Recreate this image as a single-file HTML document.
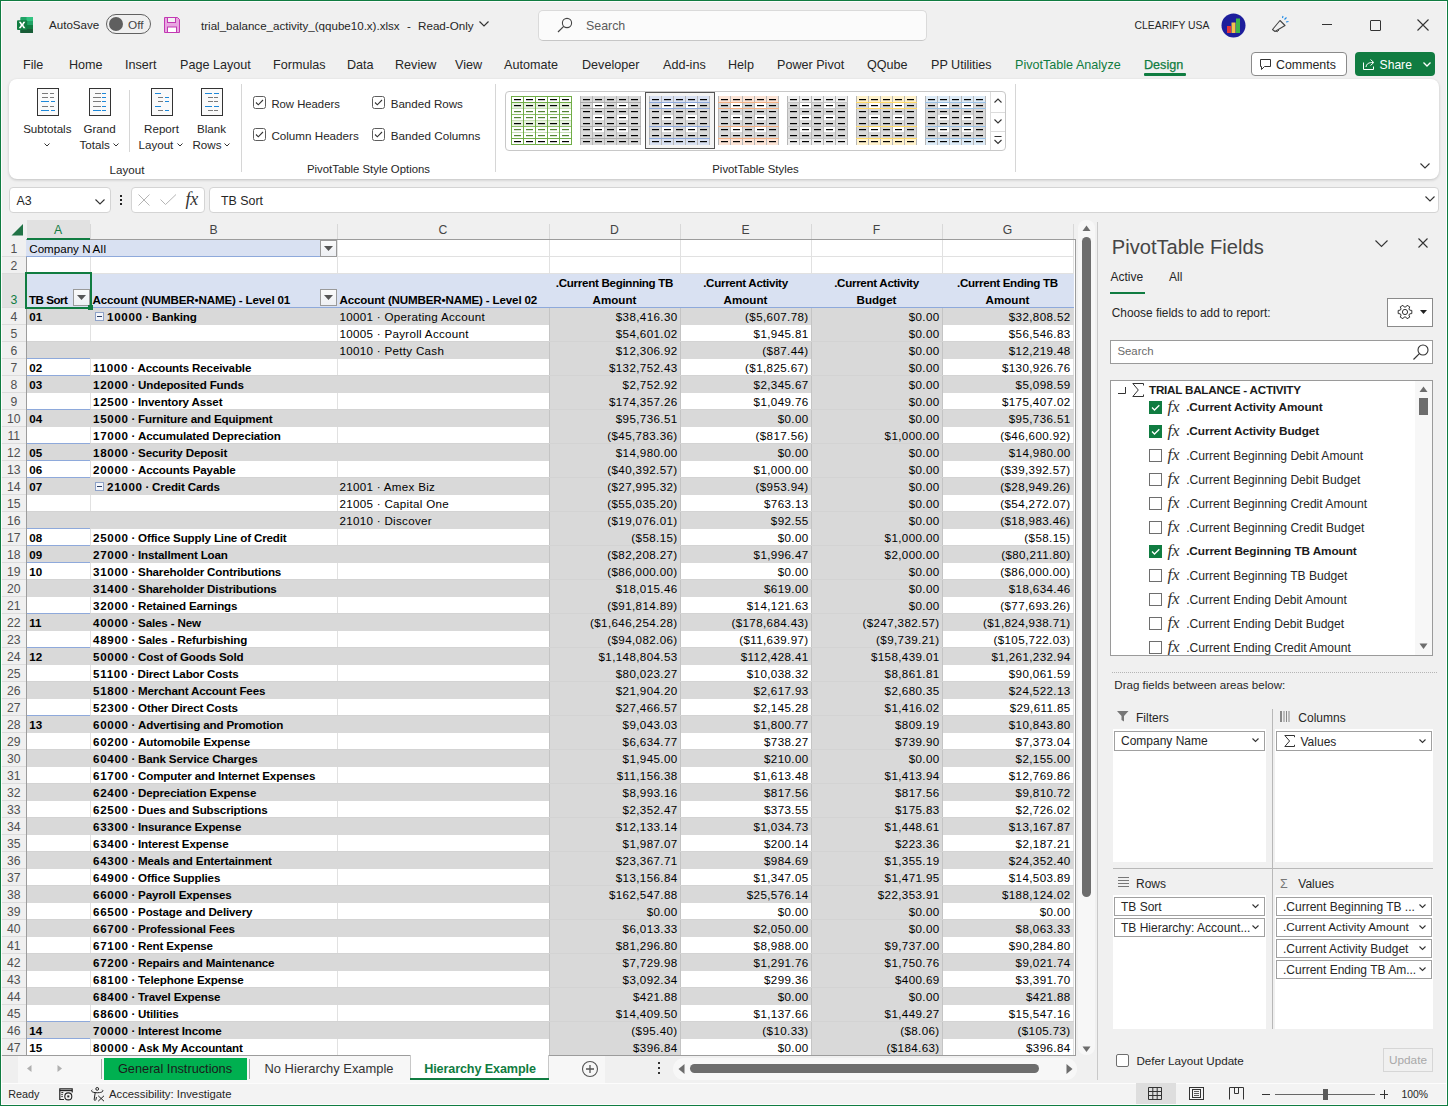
<!DOCTYPE html><html><head><meta charset="utf-8"><style>html,body{margin:0;padding:0;}body{width:1448px;height:1106px;overflow:hidden;position:relative;background:#f0f0f0;font-family:"Liberation Sans",sans-serif;}.t{position:absolute;white-space:pre;line-height:1;}.b{position:absolute;}svg.b{overflow:visible;}</style></head><body>
<svg class="b" style="left:17px;top:17px" width="16" height="16" viewBox="0 0 16 16"><rect x="3.3" y="0" width="12.7" height="16" rx="1" fill="#21a366"/><rect x="9.5" y="0" width="6.5" height="4" fill="#33c481"/><rect x="3.3" y="8" width="12.7" height="4" fill="#107c41"/><rect x="3.3" y="12" width="12.7" height="4" rx="0.5" fill="#185c37"/><rect x="0" y="3.2" width="10.2" height="9.8" rx="1" fill="#107c41"/><path d="M1.8 4.8 L3.9 4.8 L5.1 7 L6.3 4.8 L8.4 4.8 L6.3 8.1 L8.5 11.3 L6.4 11.3 L5.1 9.1 L3.8 11.3 L1.7 11.3 L3.9 8.1Z" fill="#fff"/></svg>
<div class="t" style="top:18.68px;font-size:11.6px;color:#262626;left:49px;">AutoSave</div>
<div class="b" style="left:106px;top:14px;width:45px;height:20px;border:1px solid #616161;border-radius:10px;box-sizing:border-box;"></div>
<div class="b" style="left:109px;top:17px;width:14px;height:14px;background:#5f5f5f;border-radius:7px;"></div>
<div class="t" style="top:19.61px;font-size:11.8px;color:#444;left:128px;">Off</div>
<svg class="b" style="left:164px;top:17px" width="16" height="16" viewBox="0 0 16 16"><path d="M0.5 0.5 H13.5 L15.5 2.5 V15.5 H0.5Z" fill="#e8a6e1" stroke="#c239b3" stroke-width="1"/><rect x="3.5" y="0.5" width="8" height="5" fill="#f2f2f2" stroke="#c239b3"/><rect x="3.5" y="10" width="9" height="5.5" fill="#fff" stroke="#c239b3"/></svg>
<div class="t" style="top:20.51px;font-size:11.57px;color:#262626;left:201px;">trial_balance_activity_(qqube10.x).xlsx</div>
<div class="t" style="top:20.48px;font-size:11.6px;color:#262626;left:407px;">-</div>
<div class="t" style="top:20.44px;font-size:11.65px;color:#262626;left:418px;">Read-Only</div>
<svg class="b" style="left:479px;top:21px" width="10" height="6" viewBox="0 0 10 6"><path d="M0.5 0.5 L5 5 L9.5 0.5" fill="none" stroke="#333" stroke-width="1.2"/></svg>
<div class="b" style="left:538px;top:10px;width:389px;height:31px;background:#fbfbfb;border:1px solid #dadada;border-bottom-color:#c6c6c6;border-radius:5px;box-sizing:border-box;"></div>
<svg class="b" style="left:557px;top:17px" width="16" height="16" viewBox="0 0 16 16"><circle cx="10" cy="6" r="4.6" fill="none" stroke="#444" stroke-width="1.1"/><path d="M6.7 9.3 L1 15" stroke="#444" stroke-width="1.2"/></svg>
<div class="t" style="top:19.50px;font-size:12.4px;color:#5c5c5c;left:586px;">Search</div>
<div class="t" style="top:21.20px;font-size:10.4px;color:#262626;left:1134.5px;">CLEARIFY USA</div>
<svg class="b" style="left:1221px;top:13px" width="25" height="25" viewBox="0 0 25 25"><circle cx="12.5" cy="12.5" r="12" fill="#1d1e9c"/><rect x="6" y="13" width="4" height="7" fill="#e3353a"/><rect x="10.5" y="9.5" width="4" height="10.5" fill="#f2c34b"/><rect x="15" y="5.5" width="4" height="14.5" fill="#3fb54a"/></svg>
<svg class="b" style="left:1271px;top:16px" width="19" height="17" viewBox="0 0 19 17"><path d="M1.5 13.5 L9 4.5 L14 9.5 L4 15.5 Z" fill="none" stroke="#444" stroke-width="1.1" stroke-linejoin="round"/><path d="M5 15 Q6 17 8 14" fill="none" stroke="#444"/><path d="M13.5 3.5 L15.5 1.5 M15 6 L17.5 5.5 M11.5 2 L12 0" stroke="#1e88e5" stroke-width="1.1"/></svg>
<div class="b" style="left:1322px;top:24px;width:10px;height:1px;background:#333;"></div>
<div class="b" style="left:1370px;top:20px;width:11px;height:11px;border:1px solid #333;border-radius:1px;box-sizing:border-box;"></div>
<svg class="b" style="left:1417px;top:19px" width="12" height="12" viewBox="0 0 12 12"><path d="M0.5 0.5 L11.5 11.5 M11.5 0.5 L0.5 11.5" stroke="#333" stroke-width="1.1"/></svg>
<div class="t" style="top:59.33px;font-size:12.6px;color:#262626;left:23px;">File</div>
<div class="t" style="top:59.33px;font-size:12.6px;color:#262626;left:69px;">Home</div>
<div class="t" style="top:59.33px;font-size:12.6px;color:#262626;left:125px;">Insert</div>
<div class="t" style="top:59.33px;font-size:12.6px;color:#262626;left:180px;">Page Layout</div>
<div class="t" style="top:59.33px;font-size:12.6px;color:#262626;left:273px;">Formulas</div>
<div class="t" style="top:59.33px;font-size:12.6px;color:#262626;left:347px;">Data</div>
<div class="t" style="top:59.33px;font-size:12.6px;color:#262626;left:395px;">Review</div>
<div class="t" style="top:59.33px;font-size:12.6px;color:#262626;left:455px;">View</div>
<div class="t" style="top:59.33px;font-size:12.6px;color:#262626;left:504px;">Automate</div>
<div class="t" style="top:59.33px;font-size:12.6px;color:#262626;left:582px;">Developer</div>
<div class="t" style="top:59.33px;font-size:12.6px;color:#262626;left:663px;">Add-ins</div>
<div class="t" style="top:59.33px;font-size:12.6px;color:#262626;left:728px;">Help</div>
<div class="t" style="top:59.33px;font-size:12.6px;color:#262626;left:777px;">Power Pivot</div>
<div class="t" style="top:59.33px;font-size:12.6px;color:#262626;left:867px;">QQube</div>
<div class="t" style="top:59.33px;font-size:12.6px;color:#262626;left:931px;">PP Utilities</div>
<div class="t" style="top:59.33px;font-size:12.6px;color:#107c41;left:1015px;">PivotTable Analyze</div>
<div class="t" style="top:59.33px;font-size:12.6px;color:#107c41;left:1144px;-webkit-text-stroke:0.25px #107c41;">Design</div>
<div class="b" style="left:1144px;top:73px;width:42px;height:3px;background:#107c41;border-radius:1px;"></div>
<div class="b" style="left:1251px;top:52px;width:96px;height:24px;border:1px solid #8a8a8a;border-radius:4px;background:#fff;box-sizing:border-box;"></div>
<svg class="b" style="left:1259.5px;top:59px" width="11" height="11" viewBox="0 0 11 11"><path d="M0.5 0.5 H10.5 V7.5 H4.5 L1.5 10.5 V7.5 H0.5Z" fill="none" stroke="#333" stroke-width="1"/></svg>
<div class="t" style="top:58.70px;font-size:12.4px;color:#262626;left:1276px;">Comments</div>
<div class="b" style="left:1355px;top:52px;width:80px;height:24px;background:#107c41;border-radius:4px;"></div>
<svg class="b" style="left:1363px;top:58px" width="13" height="12" viewBox="0 0 13 12"><path d="M0.5 4.5 V11.5 H10.5 V8.5" fill="none" stroke="#fff" stroke-width="1"/><path d="M3 9 C3.5 5.5 6 4.5 10 4.5 M7.5 1.5 L10.8 4.5 L7.5 7.5" fill="none" stroke="#fff" stroke-width="1"/></svg>
<div class="t" style="top:58.96px;font-size:12.1px;color:#ffffff;left:1379.6px;">Share</div>
<svg class="b" style="left:1423px;top:62px" width="8" height="5" viewBox="0 0 8 5"><path d="M0.5 0.5 L4 4 L7.5 0.5" fill="none" stroke="#fff" stroke-width="1.3"/></svg>
<div class="b" style="left:9px;top:79px;width:1430px;height:100px;background:#fff;border-radius:8px;box-shadow:0 1px 3px rgba(0,0,0,0.2);"></div>
<svg class="b" style="left:37px;top:88px" width="22" height="28" viewBox="0 0 22 28"><rect x="0.5" y="0.5" width="21" height="27" fill="#fafafa" stroke="#333" stroke-width="1"/><rect x="5" y="5" width="6" height="1" fill="#7a7a7a"/><rect x="13" y="5" width="4" height="1" fill="#7a7a7a"/><rect x="5" y="9" width="6" height="1" fill="#7a7a7a"/><rect x="13" y="9" width="4" height="1" fill="#7a7a7a"/><rect x="4" y="13" width="8" height="1" fill="#1e88d8"/><rect x="14" y="13" width="4" height="1" fill="#1e88d8"/><rect x="5" y="18" width="6" height="1" fill="#7a7a7a"/><rect x="13" y="18" width="4" height="1" fill="#7a7a7a"/><rect x="4" y="22" width="8" height="1" fill="#1e88d8"/><rect x="14" y="22" width="4" height="1" fill="#1e88d8"/></svg>
<svg class="b" style="left:89px;top:88px" width="22" height="28" viewBox="0 0 22 28"><rect x="0.5" y="0.5" width="21" height="27" fill="#fafafa" stroke="#333" stroke-width="1"/><rect x="6" y="5" width="6" height="1" fill="#7a7a7a"/><rect x="13" y="5" width="4" height="1" fill="#1e88d8"/><rect x="4" y="9" width="8" height="1" fill="#7a7a7a"/><rect x="13" y="9" width="4" height="1" fill="#1e88d8"/><rect x="4" y="13" width="8" height="1" fill="#7a7a7a"/><rect x="13" y="13" width="4" height="1" fill="#1e88d8"/><rect x="4" y="18" width="8" height="1" fill="#7a7a7a"/><rect x="13" y="18" width="4" height="1" fill="#1e88d8"/><rect x="4" y="22" width="8" height="1" fill="#1e88d8"/><rect x="13" y="22" width="4" height="1" fill="#1e88d8"/></svg>
<svg class="b" style="left:151px;top:88px" width="22" height="28" viewBox="0 0 22 28"><rect x="0.5" y="0.5" width="21" height="27" fill="#fafafa" stroke="#333" stroke-width="1"/><rect x="4" y="5" width="6" height="1" fill="#1e88d8"/><rect x="7" y="9" width="5" height="1" fill="#7a7a7a"/><rect x="14" y="9" width="4" height="1" fill="#1e88d8"/><rect x="7" y="13" width="5" height="1" fill="#7a7a7a"/><rect x="14" y="13" width="4" height="1" fill="#1e88d8"/><rect x="4" y="18" width="6" height="1" fill="#1e88d8"/><rect x="7" y="22" width="5" height="1" fill="#7a7a7a"/><rect x="14" y="22" width="4" height="1" fill="#1e88d8"/></svg>
<svg class="b" style="left:201px;top:88px" width="22" height="28" viewBox="0 0 22 28"><rect x="0.5" y="0.5" width="21" height="27" fill="#fafafa" stroke="#333" stroke-width="1"/><rect x="4" y="5" width="7" height="1" fill="#1e88d8"/><rect x="13" y="5" width="5" height="1" fill="#1e88d8"/><rect x="7" y="9" width="5" height="1" fill="#7a7a7a"/><rect x="13" y="9" width="4" height="1" fill="#7a7a7a"/><rect x="7" y="13" width="5" height="1" fill="#7a7a7a"/><rect x="13" y="13" width="4" height="1" fill="#7a7a7a"/><rect x="4" y="18" width="7" height="1" fill="#1e88d8"/><rect x="13" y="18" width="5" height="1" fill="#1e88d8"/><rect x="7" y="22" width="5" height="1" fill="#7a7a7a"/><rect x="13" y="22" width="4" height="1" fill="#7a7a7a"/></svg>
<div class="t" style="top:123.18px;font-size:11.6px;color:#262626;left:-252.7px;width:600px;text-align:center;">Subtotals</div>
<svg class="b" style="left:44px;top:143px" width="6" height="4" viewBox="0 0 6 4"><path d="M0.5 0.5 L3 3 L5.5 0.5" fill="none" stroke="#333" stroke-width="1"/></svg>
<div class="t" style="top:123.18px;font-size:11.6px;color:#262626;left:-200.5px;width:600px;text-align:center;">Grand</div>
<div class="t" style="top:138.58px;font-size:11.6px;color:#262626;left:79.5px;">Totals</div>
<svg class="b" style="left:113px;top:143px" width="6" height="4" viewBox="0 0 6 4"><path d="M0.5 0.5 L3 3 L5.5 0.5" fill="none" stroke="#333" stroke-width="1"/></svg>
<div class="b" style="left:129px;top:90px;width:1px;height:62px;background:#d6d6d6;"></div>
<div class="t" style="top:123.18px;font-size:11.6px;color:#262626;left:-138.5px;width:600px;text-align:center;">Report</div>
<div class="t" style="top:138.58px;font-size:11.6px;color:#262626;left:138.5px;">Layout</div>
<svg class="b" style="left:177px;top:143px" width="6" height="4" viewBox="0 0 6 4"><path d="M0.5 0.5 L3 3 L5.5 0.5" fill="none" stroke="#333" stroke-width="1"/></svg>
<div class="t" style="top:123.18px;font-size:11.6px;color:#262626;left:-88.5px;width:600px;text-align:center;">Blank</div>
<div class="t" style="top:138.58px;font-size:11.6px;color:#262626;left:192.5px;">Rows</div>
<svg class="b" style="left:224px;top:143px" width="6" height="4" viewBox="0 0 6 4"><path d="M0.5 0.5 L3 3 L5.5 0.5" fill="none" stroke="#333" stroke-width="1"/></svg>
<div class="t" style="top:163.68px;font-size:11.6px;color:#262626;left:-173px;width:600px;text-align:center;">Layout</div>
<div class="b" style="left:241px;top:84px;width:1px;height:88px;background:#d6d6d6;"></div>
<svg class="b" style="left:253px;top:96px" width="13" height="13" viewBox="0 0 13 13"><rect x="0.5" y="0.5" width="12" height="12" rx="2" fill="#fff" stroke="#5e5e5e" stroke-width="1"/><path d="M3 6.5 L5.3 8.8 L10 4" fill="none" stroke="#333" stroke-width="1.1"/></svg>
<div class="t" style="top:98.63px;font-size:11.3px;color:#262626;left:271.4px;">Row Headers</div>
<svg class="b" style="left:372px;top:96px" width="13" height="13" viewBox="0 0 13 13"><rect x="0.5" y="0.5" width="12" height="12" rx="2" fill="#fff" stroke="#5e5e5e" stroke-width="1"/><path d="M3 6.5 L5.3 8.8 L10 4" fill="none" stroke="#333" stroke-width="1.1"/></svg>
<div class="t" style="top:97.68px;font-size:11.6px;color:#262626;left:390.7px;">Banded Rows</div>
<svg class="b" style="left:253px;top:128px" width="13" height="13" viewBox="0 0 13 13"><rect x="0.5" y="0.5" width="12" height="12" rx="2" fill="#fff" stroke="#5e5e5e" stroke-width="1"/><path d="M3 6.5 L5.3 8.8 L10 4" fill="none" stroke="#333" stroke-width="1.1"/></svg>
<div class="t" style="top:130.34px;font-size:11.65px;color:#262626;left:271.4px;">Column Headers</div>
<svg class="b" style="left:372px;top:128px" width="13" height="13" viewBox="0 0 13 13"><rect x="0.5" y="0.5" width="12" height="12" rx="2" fill="#fff" stroke="#5e5e5e" stroke-width="1"/><path d="M3 6.5 L5.3 8.8 L10 4" fill="none" stroke="#333" stroke-width="1.1"/></svg>
<div class="t" style="top:129.60px;font-size:11.7px;color:#262626;left:390.7px;">Banded Columns</div>
<div class="t" style="top:163.89px;font-size:11.35px;color:#262626;left:68.5px;width:600px;text-align:center;">PivotTable Style Options</div>
<div class="b" style="left:495px;top:84px;width:1px;height:88px;background:#d6d6d6;"></div>
<div class="b" style="left:505px;top:91px;width:501px;height:60px;border:1px solid #c8c8c8;border-radius:4px;box-sizing:border-box;background:#fff;"></div>
<div class="b" style="left:645px;top:92px;width:70px;height:57px;border:1.5px solid #555;box-sizing:border-box;background:#f4f4f4;"></div>
<svg class="b" style="left:511px;top:96px" width="61" height="49" viewBox="0 0 61 49"><rect x="0" y="0" width="61" height="49" fill="#fff"/><rect x="0" y="7" width="61" height="5" fill="#e8f2e0"/><rect x="0" y="25" width="61" height="5" fill="#e8f2e0"/><rect x="0" y="12" width="61" height="1" fill="#c9e0b8"/><rect x="0" y="18" width="61" height="1" fill="#c9e0b8"/><rect x="0" y="24" width="61" height="1" fill="#c9e0b8"/><rect x="0" y="30" width="61" height="1" fill="#c9e0b8"/><rect x="0" y="36" width="61" height="1" fill="#c9e0b8"/><rect x="0" y="42" width="61" height="1" fill="#c9e0b8"/><rect x="0" y="18" width="61" height="1" fill="#8fc06a"/><rect x="0" y="30" width="61" height="1" fill="#8fc06a"/><rect x="0" y="0" width="1" height="49" fill="#70ad47"/><rect x="12" y="0" width="1" height="49" fill="#70ad47"/><rect x="24" y="0" width="1" height="49" fill="#70ad47"/><rect x="36" y="0" width="1" height="49" fill="#70ad47"/><rect x="48" y="0" width="1" height="49" fill="#70ad47"/><rect x="60" y="0" width="1" height="49" fill="#70ad47"/><rect x="0" y="0" width="61" height="1" fill="#70ad47"/><rect x="0" y="6" width="61" height="1" fill="#70ad47"/><rect x="0" y="42" width="61" height="1" fill="#70ad47"/><rect x="0" y="48" width="61" height="1" fill="#70ad47"/><rect x="3" y="3" width="7" height="1.2" fill="#000"/><rect x="15" y="3" width="7" height="1.2" fill="#000"/><rect x="27" y="3" width="7" height="1.2" fill="#000"/><rect x="39" y="3" width="7" height="1.2" fill="#000"/><rect x="51" y="3" width="7" height="1.2" fill="#000"/><rect x="3" y="9" width="7" height="1.2" fill="#000"/><rect x="15" y="9" width="7" height="1.2" fill="#000"/><rect x="27" y="9" width="7" height="1.2" fill="#000"/><rect x="39" y="9" width="7" height="1.2" fill="#000"/><rect x="51" y="9" width="7" height="1.2" fill="#000"/><rect x="3" y="15" width="7" height="1.2" fill="#548235"/><rect x="15" y="15" width="7" height="1.2" fill="#548235"/><rect x="27" y="15" width="7" height="1.2" fill="#548235"/><rect x="39" y="15" width="7" height="1.2" fill="#548235"/><rect x="51" y="15" width="7" height="1.2" fill="#548235"/><rect x="3" y="21" width="7" height="1.2" fill="#548235"/><rect x="15" y="21" width="7" height="1.2" fill="#548235"/><rect x="27" y="21" width="7" height="1.2" fill="#548235"/><rect x="39" y="21" width="7" height="1.2" fill="#548235"/><rect x="51" y="21" width="7" height="1.2" fill="#548235"/><rect x="3" y="27" width="7" height="1.2" fill="#000"/><rect x="15" y="27" width="7" height="1.2" fill="#000"/><rect x="27" y="27" width="7" height="1.2" fill="#000"/><rect x="39" y="27" width="7" height="1.2" fill="#000"/><rect x="51" y="27" width="7" height="1.2" fill="#000"/><rect x="3" y="33" width="7" height="1.2" fill="#548235"/><rect x="15" y="33" width="7" height="1.2" fill="#548235"/><rect x="27" y="33" width="7" height="1.2" fill="#548235"/><rect x="39" y="33" width="7" height="1.2" fill="#548235"/><rect x="51" y="33" width="7" height="1.2" fill="#548235"/><rect x="3" y="39" width="7" height="1.2" fill="#548235"/><rect x="15" y="39" width="7" height="1.2" fill="#548235"/><rect x="27" y="39" width="7" height="1.2" fill="#548235"/><rect x="39" y="39" width="7" height="1.2" fill="#548235"/><rect x="51" y="39" width="7" height="1.2" fill="#548235"/><rect x="3" y="45" width="7" height="1.2" fill="#000"/><rect x="15" y="45" width="7" height="1.2" fill="#000"/><rect x="27" y="45" width="7" height="1.2" fill="#000"/><rect x="39" y="45" width="7" height="1.2" fill="#000"/><rect x="51" y="45" width="7" height="1.2" fill="#000"/></svg>
<svg class="b" style="left:580px;top:96px" width="61" height="49" viewBox="0 0 61 49"><rect x="0" y="0" width="61" height="49" fill="#d9d9d9"/><rect x="0" y="0" width="61" height="6" fill="#d9d9d9"/><rect x="0" y="43" width="61" height="6" fill="#d9d9d9"/><rect x="13" y="7" width="11" height="5" fill="#fff"/><rect x="37" y="7" width="11" height="5" fill="#fff"/><rect x="13" y="19" width="11" height="5" fill="#fff"/><rect x="37" y="19" width="11" height="5" fill="#fff"/><rect x="13" y="31" width="11" height="5" fill="#fff"/><rect x="37" y="31" width="11" height="5" fill="#fff"/><rect x="0" y="0" width="1" height="49" fill="#b8b8b8"/><rect x="12" y="0" width="1" height="49" fill="#b8b8b8"/><rect x="24" y="0" width="1" height="49" fill="#b8b8b8"/><rect x="36" y="0" width="1" height="49" fill="#b8b8b8"/><rect x="48" y="0" width="1" height="49" fill="#b8b8b8"/><rect x="60" y="0" width="1" height="49" fill="#b8b8b8"/><rect x="0" y="6" width="61" height="1" fill="#ababab"/><rect x="0" y="12" width="61" height="1" fill="#ababab"/><rect x="0" y="30" width="61" height="1" fill="#ababab"/><rect x="0" y="42" width="61" height="1" fill="#ababab"/><rect x="3" y="3" width="7" height="1.2" fill="#000"/><rect x="15" y="3" width="7" height="1.2" fill="#000"/><rect x="27" y="3" width="7" height="1.2" fill="#000"/><rect x="39" y="3" width="7" height="1.2" fill="#000"/><rect x="51" y="3" width="7" height="1.2" fill="#000"/><rect x="3" y="9" width="7" height="1.2" fill="#000"/><rect x="15" y="9" width="7" height="1.2" fill="#000"/><rect x="27" y="9" width="7" height="1.2" fill="#000"/><rect x="39" y="9" width="7" height="1.2" fill="#000"/><rect x="51" y="9" width="7" height="1.2" fill="#000"/><rect x="3" y="15" width="7" height="1.2" fill="#000"/><rect x="15" y="15" width="7" height="1.2" fill="#000"/><rect x="27" y="15" width="7" height="1.2" fill="#000"/><rect x="39" y="15" width="7" height="1.2" fill="#000"/><rect x="51" y="15" width="7" height="1.2" fill="#000"/><rect x="3" y="21" width="7" height="1.2" fill="#000"/><rect x="15" y="21" width="7" height="1.2" fill="#000"/><rect x="27" y="21" width="7" height="1.2" fill="#000"/><rect x="39" y="21" width="7" height="1.2" fill="#000"/><rect x="51" y="21" width="7" height="1.2" fill="#000"/><rect x="3" y="27" width="7" height="1.2" fill="#000"/><rect x="15" y="27" width="7" height="1.2" fill="#000"/><rect x="27" y="27" width="7" height="1.2" fill="#000"/><rect x="39" y="27" width="7" height="1.2" fill="#000"/><rect x="51" y="27" width="7" height="1.2" fill="#000"/><rect x="3" y="33" width="7" height="1.2" fill="#000"/><rect x="15" y="33" width="7" height="1.2" fill="#000"/><rect x="27" y="33" width="7" height="1.2" fill="#000"/><rect x="39" y="33" width="7" height="1.2" fill="#000"/><rect x="51" y="33" width="7" height="1.2" fill="#000"/><rect x="3" y="39" width="7" height="1.2" fill="#000"/><rect x="15" y="39" width="7" height="1.2" fill="#000"/><rect x="27" y="39" width="7" height="1.2" fill="#000"/><rect x="39" y="39" width="7" height="1.2" fill="#000"/><rect x="51" y="39" width="7" height="1.2" fill="#000"/><rect x="3" y="45" width="7" height="1.2" fill="#000"/><rect x="15" y="45" width="7" height="1.2" fill="#000"/><rect x="27" y="45" width="7" height="1.2" fill="#000"/><rect x="39" y="45" width="7" height="1.2" fill="#000"/><rect x="51" y="45" width="7" height="1.2" fill="#000"/></svg>
<svg class="b" style="left:649px;top:96px" width="61" height="49" viewBox="0 0 61 49"><rect x="0" y="0" width="61" height="49" fill="#d9d9d9"/><rect x="0" y="0" width="61" height="6" fill="#d9e1f2"/><rect x="0" y="43" width="61" height="6" fill="#d9e1f2"/><rect x="13" y="7" width="11" height="5" fill="#fff"/><rect x="37" y="7" width="11" height="5" fill="#fff"/><rect x="13" y="19" width="11" height="5" fill="#fff"/><rect x="37" y="19" width="11" height="5" fill="#fff"/><rect x="13" y="31" width="11" height="5" fill="#fff"/><rect x="37" y="31" width="11" height="5" fill="#fff"/><rect x="0" y="0" width="1" height="49" fill="#b8b8b8"/><rect x="12" y="0" width="1" height="49" fill="#b8b8b8"/><rect x="24" y="0" width="1" height="49" fill="#b8b8b8"/><rect x="36" y="0" width="1" height="49" fill="#b8b8b8"/><rect x="48" y="0" width="1" height="49" fill="#b8b8b8"/><rect x="60" y="0" width="1" height="49" fill="#b8b8b8"/><rect x="0" y="6" width="61" height="1" fill="#8ea9db"/><rect x="0" y="12" width="61" height="1" fill="#8ea9db"/><rect x="0" y="30" width="61" height="1" fill="#8ea9db"/><rect x="0" y="42" width="61" height="1" fill="#8ea9db"/><rect x="3" y="3" width="7" height="1.2" fill="#000"/><rect x="15" y="3" width="7" height="1.2" fill="#000"/><rect x="27" y="3" width="7" height="1.2" fill="#000"/><rect x="39" y="3" width="7" height="1.2" fill="#000"/><rect x="51" y="3" width="7" height="1.2" fill="#000"/><rect x="3" y="9" width="7" height="1.2" fill="#000"/><rect x="15" y="9" width="7" height="1.2" fill="#000"/><rect x="27" y="9" width="7" height="1.2" fill="#000"/><rect x="39" y="9" width="7" height="1.2" fill="#000"/><rect x="51" y="9" width="7" height="1.2" fill="#000"/><rect x="3" y="15" width="7" height="1.2" fill="#000"/><rect x="15" y="15" width="7" height="1.2" fill="#000"/><rect x="27" y="15" width="7" height="1.2" fill="#000"/><rect x="39" y="15" width="7" height="1.2" fill="#000"/><rect x="51" y="15" width="7" height="1.2" fill="#000"/><rect x="3" y="21" width="7" height="1.2" fill="#000"/><rect x="15" y="21" width="7" height="1.2" fill="#000"/><rect x="27" y="21" width="7" height="1.2" fill="#000"/><rect x="39" y="21" width="7" height="1.2" fill="#000"/><rect x="51" y="21" width="7" height="1.2" fill="#000"/><rect x="3" y="27" width="7" height="1.2" fill="#000"/><rect x="15" y="27" width="7" height="1.2" fill="#000"/><rect x="27" y="27" width="7" height="1.2" fill="#000"/><rect x="39" y="27" width="7" height="1.2" fill="#000"/><rect x="51" y="27" width="7" height="1.2" fill="#000"/><rect x="3" y="33" width="7" height="1.2" fill="#000"/><rect x="15" y="33" width="7" height="1.2" fill="#000"/><rect x="27" y="33" width="7" height="1.2" fill="#000"/><rect x="39" y="33" width="7" height="1.2" fill="#000"/><rect x="51" y="33" width="7" height="1.2" fill="#000"/><rect x="3" y="39" width="7" height="1.2" fill="#000"/><rect x="15" y="39" width="7" height="1.2" fill="#000"/><rect x="27" y="39" width="7" height="1.2" fill="#000"/><rect x="39" y="39" width="7" height="1.2" fill="#000"/><rect x="51" y="39" width="7" height="1.2" fill="#000"/><rect x="3" y="45" width="7" height="1.2" fill="#000"/><rect x="15" y="45" width="7" height="1.2" fill="#000"/><rect x="27" y="45" width="7" height="1.2" fill="#000"/><rect x="39" y="45" width="7" height="1.2" fill="#000"/><rect x="51" y="45" width="7" height="1.2" fill="#000"/></svg>
<svg class="b" style="left:718px;top:96px" width="61" height="49" viewBox="0 0 61 49"><rect x="0" y="0" width="61" height="49" fill="#d9d9d9"/><rect x="0" y="0" width="61" height="6" fill="#fce4d6"/><rect x="0" y="43" width="61" height="6" fill="#fce4d6"/><rect x="13" y="7" width="11" height="5" fill="#fff"/><rect x="37" y="7" width="11" height="5" fill="#fff"/><rect x="13" y="19" width="11" height="5" fill="#fff"/><rect x="37" y="19" width="11" height="5" fill="#fff"/><rect x="13" y="31" width="11" height="5" fill="#fff"/><rect x="37" y="31" width="11" height="5" fill="#fff"/><rect x="0" y="0" width="1" height="49" fill="#b8b8b8"/><rect x="12" y="0" width="1" height="49" fill="#b8b8b8"/><rect x="24" y="0" width="1" height="49" fill="#b8b8b8"/><rect x="36" y="0" width="1" height="49" fill="#b8b8b8"/><rect x="48" y="0" width="1" height="49" fill="#b8b8b8"/><rect x="60" y="0" width="1" height="49" fill="#b8b8b8"/><rect x="0" y="6" width="61" height="1" fill="#f4b084"/><rect x="0" y="12" width="61" height="1" fill="#f4b084"/><rect x="0" y="30" width="61" height="1" fill="#f4b084"/><rect x="0" y="42" width="61" height="1" fill="#f4b084"/><rect x="3" y="3" width="7" height="1.2" fill="#000"/><rect x="15" y="3" width="7" height="1.2" fill="#000"/><rect x="27" y="3" width="7" height="1.2" fill="#000"/><rect x="39" y="3" width="7" height="1.2" fill="#000"/><rect x="51" y="3" width="7" height="1.2" fill="#000"/><rect x="3" y="9" width="7" height="1.2" fill="#000"/><rect x="15" y="9" width="7" height="1.2" fill="#000"/><rect x="27" y="9" width="7" height="1.2" fill="#000"/><rect x="39" y="9" width="7" height="1.2" fill="#000"/><rect x="51" y="9" width="7" height="1.2" fill="#000"/><rect x="3" y="15" width="7" height="1.2" fill="#000"/><rect x="15" y="15" width="7" height="1.2" fill="#000"/><rect x="27" y="15" width="7" height="1.2" fill="#000"/><rect x="39" y="15" width="7" height="1.2" fill="#000"/><rect x="51" y="15" width="7" height="1.2" fill="#000"/><rect x="3" y="21" width="7" height="1.2" fill="#000"/><rect x="15" y="21" width="7" height="1.2" fill="#000"/><rect x="27" y="21" width="7" height="1.2" fill="#000"/><rect x="39" y="21" width="7" height="1.2" fill="#000"/><rect x="51" y="21" width="7" height="1.2" fill="#000"/><rect x="3" y="27" width="7" height="1.2" fill="#000"/><rect x="15" y="27" width="7" height="1.2" fill="#000"/><rect x="27" y="27" width="7" height="1.2" fill="#000"/><rect x="39" y="27" width="7" height="1.2" fill="#000"/><rect x="51" y="27" width="7" height="1.2" fill="#000"/><rect x="3" y="33" width="7" height="1.2" fill="#000"/><rect x="15" y="33" width="7" height="1.2" fill="#000"/><rect x="27" y="33" width="7" height="1.2" fill="#000"/><rect x="39" y="33" width="7" height="1.2" fill="#000"/><rect x="51" y="33" width="7" height="1.2" fill="#000"/><rect x="3" y="39" width="7" height="1.2" fill="#000"/><rect x="15" y="39" width="7" height="1.2" fill="#000"/><rect x="27" y="39" width="7" height="1.2" fill="#000"/><rect x="39" y="39" width="7" height="1.2" fill="#000"/><rect x="51" y="39" width="7" height="1.2" fill="#000"/><rect x="3" y="45" width="7" height="1.2" fill="#000"/><rect x="15" y="45" width="7" height="1.2" fill="#000"/><rect x="27" y="45" width="7" height="1.2" fill="#000"/><rect x="39" y="45" width="7" height="1.2" fill="#000"/><rect x="51" y="45" width="7" height="1.2" fill="#000"/></svg>
<svg class="b" style="left:787px;top:96px" width="61" height="49" viewBox="0 0 61 49"><rect x="0" y="0" width="61" height="49" fill="#d9d9d9"/><rect x="0" y="0" width="61" height="6" fill="#eeeeee"/><rect x="0" y="43" width="61" height="6" fill="#eeeeee"/><rect x="13" y="7" width="11" height="5" fill="#fff"/><rect x="37" y="7" width="11" height="5" fill="#fff"/><rect x="13" y="19" width="11" height="5" fill="#fff"/><rect x="37" y="19" width="11" height="5" fill="#fff"/><rect x="13" y="31" width="11" height="5" fill="#fff"/><rect x="37" y="31" width="11" height="5" fill="#fff"/><rect x="0" y="0" width="1" height="49" fill="#b8b8b8"/><rect x="12" y="0" width="1" height="49" fill="#b8b8b8"/><rect x="24" y="0" width="1" height="49" fill="#b8b8b8"/><rect x="36" y="0" width="1" height="49" fill="#b8b8b8"/><rect x="48" y="0" width="1" height="49" fill="#b8b8b8"/><rect x="60" y="0" width="1" height="49" fill="#b8b8b8"/><rect x="0" y="6" width="61" height="1" fill="#c4c4c4"/><rect x="0" y="12" width="61" height="1" fill="#c4c4c4"/><rect x="0" y="30" width="61" height="1" fill="#c4c4c4"/><rect x="0" y="42" width="61" height="1" fill="#c4c4c4"/><rect x="3" y="3" width="7" height="1.2" fill="#000"/><rect x="15" y="3" width="7" height="1.2" fill="#000"/><rect x="27" y="3" width="7" height="1.2" fill="#000"/><rect x="39" y="3" width="7" height="1.2" fill="#000"/><rect x="51" y="3" width="7" height="1.2" fill="#000"/><rect x="3" y="9" width="7" height="1.2" fill="#000"/><rect x="15" y="9" width="7" height="1.2" fill="#000"/><rect x="27" y="9" width="7" height="1.2" fill="#000"/><rect x="39" y="9" width="7" height="1.2" fill="#000"/><rect x="51" y="9" width="7" height="1.2" fill="#000"/><rect x="3" y="15" width="7" height="1.2" fill="#000"/><rect x="15" y="15" width="7" height="1.2" fill="#000"/><rect x="27" y="15" width="7" height="1.2" fill="#000"/><rect x="39" y="15" width="7" height="1.2" fill="#000"/><rect x="51" y="15" width="7" height="1.2" fill="#000"/><rect x="3" y="21" width="7" height="1.2" fill="#000"/><rect x="15" y="21" width="7" height="1.2" fill="#000"/><rect x="27" y="21" width="7" height="1.2" fill="#000"/><rect x="39" y="21" width="7" height="1.2" fill="#000"/><rect x="51" y="21" width="7" height="1.2" fill="#000"/><rect x="3" y="27" width="7" height="1.2" fill="#000"/><rect x="15" y="27" width="7" height="1.2" fill="#000"/><rect x="27" y="27" width="7" height="1.2" fill="#000"/><rect x="39" y="27" width="7" height="1.2" fill="#000"/><rect x="51" y="27" width="7" height="1.2" fill="#000"/><rect x="3" y="33" width="7" height="1.2" fill="#000"/><rect x="15" y="33" width="7" height="1.2" fill="#000"/><rect x="27" y="33" width="7" height="1.2" fill="#000"/><rect x="39" y="33" width="7" height="1.2" fill="#000"/><rect x="51" y="33" width="7" height="1.2" fill="#000"/><rect x="3" y="39" width="7" height="1.2" fill="#000"/><rect x="15" y="39" width="7" height="1.2" fill="#000"/><rect x="27" y="39" width="7" height="1.2" fill="#000"/><rect x="39" y="39" width="7" height="1.2" fill="#000"/><rect x="51" y="39" width="7" height="1.2" fill="#000"/><rect x="3" y="45" width="7" height="1.2" fill="#000"/><rect x="15" y="45" width="7" height="1.2" fill="#000"/><rect x="27" y="45" width="7" height="1.2" fill="#000"/><rect x="39" y="45" width="7" height="1.2" fill="#000"/><rect x="51" y="45" width="7" height="1.2" fill="#000"/></svg>
<svg class="b" style="left:856px;top:96px" width="61" height="49" viewBox="0 0 61 49"><rect x="0" y="0" width="61" height="49" fill="#d9d9d9"/><rect x="0" y="0" width="61" height="6" fill="#fff2cc"/><rect x="0" y="43" width="61" height="6" fill="#fff2cc"/><rect x="13" y="7" width="11" height="5" fill="#fff"/><rect x="37" y="7" width="11" height="5" fill="#fff"/><rect x="13" y="19" width="11" height="5" fill="#fff"/><rect x="37" y="19" width="11" height="5" fill="#fff"/><rect x="13" y="31" width="11" height="5" fill="#fff"/><rect x="37" y="31" width="11" height="5" fill="#fff"/><rect x="0" y="0" width="1" height="49" fill="#b8b8b8"/><rect x="12" y="0" width="1" height="49" fill="#b8b8b8"/><rect x="24" y="0" width="1" height="49" fill="#b8b8b8"/><rect x="36" y="0" width="1" height="49" fill="#b8b8b8"/><rect x="48" y="0" width="1" height="49" fill="#b8b8b8"/><rect x="60" y="0" width="1" height="49" fill="#b8b8b8"/><rect x="0" y="6" width="61" height="1" fill="#ffd966"/><rect x="0" y="12" width="61" height="1" fill="#ffd966"/><rect x="0" y="30" width="61" height="1" fill="#ffd966"/><rect x="0" y="42" width="61" height="1" fill="#ffd966"/><rect x="3" y="3" width="7" height="1.2" fill="#000"/><rect x="15" y="3" width="7" height="1.2" fill="#000"/><rect x="27" y="3" width="7" height="1.2" fill="#000"/><rect x="39" y="3" width="7" height="1.2" fill="#000"/><rect x="51" y="3" width="7" height="1.2" fill="#000"/><rect x="3" y="9" width="7" height="1.2" fill="#000"/><rect x="15" y="9" width="7" height="1.2" fill="#000"/><rect x="27" y="9" width="7" height="1.2" fill="#000"/><rect x="39" y="9" width="7" height="1.2" fill="#000"/><rect x="51" y="9" width="7" height="1.2" fill="#000"/><rect x="3" y="15" width="7" height="1.2" fill="#000"/><rect x="15" y="15" width="7" height="1.2" fill="#000"/><rect x="27" y="15" width="7" height="1.2" fill="#000"/><rect x="39" y="15" width="7" height="1.2" fill="#000"/><rect x="51" y="15" width="7" height="1.2" fill="#000"/><rect x="3" y="21" width="7" height="1.2" fill="#000"/><rect x="15" y="21" width="7" height="1.2" fill="#000"/><rect x="27" y="21" width="7" height="1.2" fill="#000"/><rect x="39" y="21" width="7" height="1.2" fill="#000"/><rect x="51" y="21" width="7" height="1.2" fill="#000"/><rect x="3" y="27" width="7" height="1.2" fill="#000"/><rect x="15" y="27" width="7" height="1.2" fill="#000"/><rect x="27" y="27" width="7" height="1.2" fill="#000"/><rect x="39" y="27" width="7" height="1.2" fill="#000"/><rect x="51" y="27" width="7" height="1.2" fill="#000"/><rect x="3" y="33" width="7" height="1.2" fill="#000"/><rect x="15" y="33" width="7" height="1.2" fill="#000"/><rect x="27" y="33" width="7" height="1.2" fill="#000"/><rect x="39" y="33" width="7" height="1.2" fill="#000"/><rect x="51" y="33" width="7" height="1.2" fill="#000"/><rect x="3" y="39" width="7" height="1.2" fill="#000"/><rect x="15" y="39" width="7" height="1.2" fill="#000"/><rect x="27" y="39" width="7" height="1.2" fill="#000"/><rect x="39" y="39" width="7" height="1.2" fill="#000"/><rect x="51" y="39" width="7" height="1.2" fill="#000"/><rect x="3" y="45" width="7" height="1.2" fill="#000"/><rect x="15" y="45" width="7" height="1.2" fill="#000"/><rect x="27" y="45" width="7" height="1.2" fill="#000"/><rect x="39" y="45" width="7" height="1.2" fill="#000"/><rect x="51" y="45" width="7" height="1.2" fill="#000"/></svg>
<svg class="b" style="left:925px;top:96px" width="61" height="49" viewBox="0 0 61 49"><rect x="0" y="0" width="61" height="49" fill="#d9d9d9"/><rect x="0" y="0" width="61" height="6" fill="#ddebf7"/><rect x="0" y="43" width="61" height="6" fill="#ddebf7"/><rect x="13" y="7" width="11" height="5" fill="#fff"/><rect x="37" y="7" width="11" height="5" fill="#fff"/><rect x="13" y="19" width="11" height="5" fill="#fff"/><rect x="37" y="19" width="11" height="5" fill="#fff"/><rect x="13" y="31" width="11" height="5" fill="#fff"/><rect x="37" y="31" width="11" height="5" fill="#fff"/><rect x="0" y="0" width="1" height="49" fill="#b8b8b8"/><rect x="12" y="0" width="1" height="49" fill="#b8b8b8"/><rect x="24" y="0" width="1" height="49" fill="#b8b8b8"/><rect x="36" y="0" width="1" height="49" fill="#b8b8b8"/><rect x="48" y="0" width="1" height="49" fill="#b8b8b8"/><rect x="60" y="0" width="1" height="49" fill="#b8b8b8"/><rect x="0" y="6" width="61" height="1" fill="#9bc2e6"/><rect x="0" y="12" width="61" height="1" fill="#9bc2e6"/><rect x="0" y="30" width="61" height="1" fill="#9bc2e6"/><rect x="0" y="42" width="61" height="1" fill="#9bc2e6"/><rect x="3" y="3" width="7" height="1.2" fill="#000"/><rect x="15" y="3" width="7" height="1.2" fill="#000"/><rect x="27" y="3" width="7" height="1.2" fill="#000"/><rect x="39" y="3" width="7" height="1.2" fill="#000"/><rect x="51" y="3" width="7" height="1.2" fill="#000"/><rect x="3" y="9" width="7" height="1.2" fill="#000"/><rect x="15" y="9" width="7" height="1.2" fill="#000"/><rect x="27" y="9" width="7" height="1.2" fill="#000"/><rect x="39" y="9" width="7" height="1.2" fill="#000"/><rect x="51" y="9" width="7" height="1.2" fill="#000"/><rect x="3" y="15" width="7" height="1.2" fill="#000"/><rect x="15" y="15" width="7" height="1.2" fill="#000"/><rect x="27" y="15" width="7" height="1.2" fill="#000"/><rect x="39" y="15" width="7" height="1.2" fill="#000"/><rect x="51" y="15" width="7" height="1.2" fill="#000"/><rect x="3" y="21" width="7" height="1.2" fill="#000"/><rect x="15" y="21" width="7" height="1.2" fill="#000"/><rect x="27" y="21" width="7" height="1.2" fill="#000"/><rect x="39" y="21" width="7" height="1.2" fill="#000"/><rect x="51" y="21" width="7" height="1.2" fill="#000"/><rect x="3" y="27" width="7" height="1.2" fill="#000"/><rect x="15" y="27" width="7" height="1.2" fill="#000"/><rect x="27" y="27" width="7" height="1.2" fill="#000"/><rect x="39" y="27" width="7" height="1.2" fill="#000"/><rect x="51" y="27" width="7" height="1.2" fill="#000"/><rect x="3" y="33" width="7" height="1.2" fill="#000"/><rect x="15" y="33" width="7" height="1.2" fill="#000"/><rect x="27" y="33" width="7" height="1.2" fill="#000"/><rect x="39" y="33" width="7" height="1.2" fill="#000"/><rect x="51" y="33" width="7" height="1.2" fill="#000"/><rect x="3" y="39" width="7" height="1.2" fill="#000"/><rect x="15" y="39" width="7" height="1.2" fill="#000"/><rect x="27" y="39" width="7" height="1.2" fill="#000"/><rect x="39" y="39" width="7" height="1.2" fill="#000"/><rect x="51" y="39" width="7" height="1.2" fill="#000"/><rect x="3" y="45" width="7" height="1.2" fill="#000"/><rect x="15" y="45" width="7" height="1.2" fill="#000"/><rect x="27" y="45" width="7" height="1.2" fill="#000"/><rect x="39" y="45" width="7" height="1.2" fill="#000"/><rect x="51" y="45" width="7" height="1.2" fill="#000"/></svg>
<div class="b" style="left:990px;top:92px;width:1px;height:58px;background:#dcdcdc;"></div>
<div class="b" style="left:991px;top:112px;width:14px;height:1px;background:#dcdcdc;"></div>
<div class="b" style="left:991px;top:131px;width:14px;height:1px;background:#dcdcdc;"></div>
<svg class="b" style="left:994px;top:98px" width="8" height="5" viewBox="0 0 8 5"><path d="M0.5 4.5 L4 1 L7.5 4.5" fill="none" stroke="#333" stroke-width="1.1"/></svg>
<svg class="b" style="left:994px;top:119px" width="8" height="5" viewBox="0 0 8 5"><path d="M0.5 0.5 L4 4 L7.5 0.5" fill="none" stroke="#333" stroke-width="1.1"/></svg>
<svg class="b" style="left:994px;top:136px" width="8" height="9" viewBox="0 0 8 9"><path d="M0.5 0.5 H7.5" stroke="#333" stroke-width="1"/><path d="M0.5 4 L4 7.5 L7.5 4" fill="none" stroke="#333" stroke-width="1.1"/></svg>
<div class="t" style="top:163.89px;font-size:11.35px;color:#262626;left:455.5px;width:600px;text-align:center;">PivotTable Styles</div>
<div class="b" style="left:1015px;top:84px;width:1px;height:88px;background:#d6d6d6;"></div>
<svg class="b" style="left:1419.5px;top:163px" width="10" height="6" viewBox="0 0 10 6"><path d="M0.5 0.5 L5 5 L9.5 0.5" fill="none" stroke="#333" stroke-width="1.1"/></svg>
<div class="b" style="left:9px;top:187px;width:102px;height:26px;background:#fff;border:1px solid #d4d4d4;border-radius:4px;box-sizing:border-box;"></div>
<div class="t" style="top:194.80px;font-size:12.4px;color:#262626;left:16.6px;">A3</div>
<svg class="b" style="left:95px;top:199px" width="10" height="6" viewBox="0 0 10 6"><path d="M0.5 0.5 L5 5 L9.5 0.5" fill="none" stroke="#333" stroke-width="1.1"/></svg>
<div class="b" style="left:120px;top:195px;width:2px;height:2px;background:#222;"></div>
<div class="b" style="left:120px;top:199px;width:2px;height:2px;background:#222;"></div>
<div class="b" style="left:120px;top:203px;width:2px;height:2px;background:#222;"></div>
<div class="b" style="left:131px;top:187px;width:74px;height:26px;background:#fff;border:1px solid #d4d4d4;border-radius:4px;box-sizing:border-box;"></div>
<svg class="b" style="left:138px;top:194px" width="12" height="12" viewBox="0 0 12 12"><path d="M0.5 0.5 L11.5 11.5 M11.5 0.5 L0.5 11.5" stroke="#b5b5b5" stroke-width="1"/></svg>
<svg class="b" style="left:160px;top:194px" width="17" height="11" viewBox="0 0 17 11"><path d="M0.5 5.5 L5.5 10.5 L16 0.5" fill="none" stroke="#b5b5b5" stroke-width="1"/></svg>
<div class="t" style="top:189.76px;font-size:18px;color:#333;left:185.5px;font-style:italic;font-family:'Liberation Serif',serif;letter-spacing:-0.3px;">fx</div>
<div class="b" style="left:209px;top:187px;width:1230px;height:26px;background:#fff;border:1px solid #d4d4d4;border-radius:4px;box-sizing:border-box;"></div>
<div class="t" style="top:194.50px;font-size:12.4px;color:#262626;left:221px;">TB Sort</div>
<svg class="b" style="left:1424.5px;top:196px" width="10" height="6" viewBox="0 0 10 6"><path d="M0.5 0.5 L5 5 L9.5 0.5" fill="none" stroke="#333" stroke-width="1.1"/></svg>
<div class="b" style="left:1px;top:220px;width:1096px;height:836px;background:#f0f0f0;"></div>
<div class="b" style="left:27px;top:240px;width:1048px;height:815px;background:#fff;"></div>
<div class="b" style="left:26px;top:220px;width:1048px;height:19px;background:#f0f0f0;"></div>
<div class="b" style="left:27px;top:220px;width:63px;height:19px;background:#e1e1e1;"></div>
<div class="b" style="left:26px;top:239px;width:1049px;height:1px;background:#9c9c9c;"></div>
<div class="b" style="left:27px;top:238px;width:63px;height:2px;background:#107c41;"></div>
<div class="t" style="top:223.67px;font-size:12.2px;color:#107c41;left:-242.0px;width:600px;text-align:center;">A</div>
<div class="b" style="left:90px;top:224px;width:1px;height:15px;background:#d8d8d8;"></div>
<div class="t" style="top:223.67px;font-size:12.2px;color:#444;left:-86.5px;width:600px;text-align:center;">B</div>
<div class="b" style="left:337px;top:224px;width:1px;height:15px;background:#d8d8d8;"></div>
<div class="t" style="top:223.67px;font-size:12.2px;color:#444;left:143.0px;width:600px;text-align:center;">C</div>
<div class="b" style="left:549px;top:224px;width:1px;height:15px;background:#d8d8d8;"></div>
<div class="t" style="top:223.67px;font-size:12.2px;color:#444;left:314.5px;width:600px;text-align:center;">D</div>
<div class="b" style="left:680px;top:224px;width:1px;height:15px;background:#d8d8d8;"></div>
<div class="t" style="top:223.67px;font-size:12.2px;color:#444;left:445.5px;width:600px;text-align:center;">E</div>
<div class="b" style="left:811px;top:224px;width:1px;height:15px;background:#d8d8d8;"></div>
<div class="t" style="top:223.67px;font-size:12.2px;color:#444;left:576.5px;width:600px;text-align:center;">F</div>
<div class="b" style="left:942px;top:224px;width:1px;height:15px;background:#d8d8d8;"></div>
<div class="t" style="top:223.67px;font-size:12.2px;color:#444;left:707.5px;width:600px;text-align:center;">G</div>
<div class="b" style="left:1073px;top:224px;width:1px;height:15px;background:#d8d8d8;"></div>
<svg class="b" style="left:11px;top:224px" width="13" height="12" viewBox="0 0 13 12"><path d="M12 0 V11.5 H0.5Z" fill="#217346"/></svg>
<div class="b" style="left:1px;top:240px;width:25px;height:815px;background:#f0f0f0;"></div>
<div class="b" style="left:26px;top:240px;width:1px;height:816px;background:#9c9c9c;"></div>
<div class="b" style="left:1px;top:274px;width:25px;height:33px;background:#e1e1e1;"></div>
<div class="b" style="left:1px;top:256px;width:25px;height:1px;background:#dcdcdc;"></div>
<div class="t" style="top:242.67px;font-size:12.2px;color:#505050;left:-286.2px;width:600px;text-align:center;">1</div>
<div class="b" style="left:1px;top:273px;width:25px;height:1px;background:#dcdcdc;"></div>
<div class="t" style="top:259.67px;font-size:12.2px;color:#505050;left:-286.2px;width:600px;text-align:center;">2</div>
<div class="b" style="left:1px;top:307px;width:25px;height:1px;background:#dcdcdc;"></div>
<div class="t" style="top:293.67px;font-size:12.2px;color:#107c41;left:-286.2px;width:600px;text-align:center;">3</div>
<div class="b" style="left:1px;top:324px;width:25px;height:1px;background:#dcdcdc;"></div>
<div class="t" style="top:310.67px;font-size:12.2px;color:#505050;left:-286.2px;width:600px;text-align:center;">4</div>
<div class="b" style="left:1px;top:341px;width:25px;height:1px;background:#dcdcdc;"></div>
<div class="t" style="top:327.67px;font-size:12.2px;color:#505050;left:-286.2px;width:600px;text-align:center;">5</div>
<div class="b" style="left:1px;top:358px;width:25px;height:1px;background:#dcdcdc;"></div>
<div class="t" style="top:344.67px;font-size:12.2px;color:#505050;left:-286.2px;width:600px;text-align:center;">6</div>
<div class="b" style="left:1px;top:375px;width:25px;height:1px;background:#dcdcdc;"></div>
<div class="t" style="top:361.67px;font-size:12.2px;color:#505050;left:-286.2px;width:600px;text-align:center;">7</div>
<div class="b" style="left:1px;top:392px;width:25px;height:1px;background:#dcdcdc;"></div>
<div class="t" style="top:378.67px;font-size:12.2px;color:#505050;left:-286.2px;width:600px;text-align:center;">8</div>
<div class="b" style="left:1px;top:409px;width:25px;height:1px;background:#dcdcdc;"></div>
<div class="t" style="top:395.67px;font-size:12.2px;color:#505050;left:-286.2px;width:600px;text-align:center;">9</div>
<div class="b" style="left:1px;top:426px;width:25px;height:1px;background:#dcdcdc;"></div>
<div class="t" style="top:412.67px;font-size:12.2px;color:#505050;left:-286.2px;width:600px;text-align:center;">10</div>
<div class="b" style="left:1px;top:443px;width:25px;height:1px;background:#dcdcdc;"></div>
<div class="t" style="top:429.67px;font-size:12.2px;color:#505050;left:-286.2px;width:600px;text-align:center;">11</div>
<div class="b" style="left:1px;top:460px;width:25px;height:1px;background:#dcdcdc;"></div>
<div class="t" style="top:446.67px;font-size:12.2px;color:#505050;left:-286.2px;width:600px;text-align:center;">12</div>
<div class="b" style="left:1px;top:477px;width:25px;height:1px;background:#dcdcdc;"></div>
<div class="t" style="top:463.67px;font-size:12.2px;color:#505050;left:-286.2px;width:600px;text-align:center;">13</div>
<div class="b" style="left:1px;top:494px;width:25px;height:1px;background:#dcdcdc;"></div>
<div class="t" style="top:480.67px;font-size:12.2px;color:#505050;left:-286.2px;width:600px;text-align:center;">14</div>
<div class="b" style="left:1px;top:511px;width:25px;height:1px;background:#dcdcdc;"></div>
<div class="t" style="top:497.67px;font-size:12.2px;color:#505050;left:-286.2px;width:600px;text-align:center;">15</div>
<div class="b" style="left:1px;top:528px;width:25px;height:1px;background:#dcdcdc;"></div>
<div class="t" style="top:514.67px;font-size:12.2px;color:#505050;left:-286.2px;width:600px;text-align:center;">16</div>
<div class="b" style="left:1px;top:545px;width:25px;height:1px;background:#dcdcdc;"></div>
<div class="t" style="top:531.67px;font-size:12.2px;color:#505050;left:-286.2px;width:600px;text-align:center;">17</div>
<div class="b" style="left:1px;top:562px;width:25px;height:1px;background:#dcdcdc;"></div>
<div class="t" style="top:548.67px;font-size:12.2px;color:#505050;left:-286.2px;width:600px;text-align:center;">18</div>
<div class="b" style="left:1px;top:579px;width:25px;height:1px;background:#dcdcdc;"></div>
<div class="t" style="top:565.67px;font-size:12.2px;color:#505050;left:-286.2px;width:600px;text-align:center;">19</div>
<div class="b" style="left:1px;top:596px;width:25px;height:1px;background:#dcdcdc;"></div>
<div class="t" style="top:582.67px;font-size:12.2px;color:#505050;left:-286.2px;width:600px;text-align:center;">20</div>
<div class="b" style="left:1px;top:613px;width:25px;height:1px;background:#dcdcdc;"></div>
<div class="t" style="top:599.67px;font-size:12.2px;color:#505050;left:-286.2px;width:600px;text-align:center;">21</div>
<div class="b" style="left:1px;top:630px;width:25px;height:1px;background:#dcdcdc;"></div>
<div class="t" style="top:616.67px;font-size:12.2px;color:#505050;left:-286.2px;width:600px;text-align:center;">22</div>
<div class="b" style="left:1px;top:647px;width:25px;height:1px;background:#dcdcdc;"></div>
<div class="t" style="top:633.67px;font-size:12.2px;color:#505050;left:-286.2px;width:600px;text-align:center;">23</div>
<div class="b" style="left:1px;top:664px;width:25px;height:1px;background:#dcdcdc;"></div>
<div class="t" style="top:650.67px;font-size:12.2px;color:#505050;left:-286.2px;width:600px;text-align:center;">24</div>
<div class="b" style="left:1px;top:681px;width:25px;height:1px;background:#dcdcdc;"></div>
<div class="t" style="top:667.67px;font-size:12.2px;color:#505050;left:-286.2px;width:600px;text-align:center;">25</div>
<div class="b" style="left:1px;top:698px;width:25px;height:1px;background:#dcdcdc;"></div>
<div class="t" style="top:684.67px;font-size:12.2px;color:#505050;left:-286.2px;width:600px;text-align:center;">26</div>
<div class="b" style="left:1px;top:715px;width:25px;height:1px;background:#dcdcdc;"></div>
<div class="t" style="top:701.67px;font-size:12.2px;color:#505050;left:-286.2px;width:600px;text-align:center;">27</div>
<div class="b" style="left:1px;top:732px;width:25px;height:1px;background:#dcdcdc;"></div>
<div class="t" style="top:718.67px;font-size:12.2px;color:#505050;left:-286.2px;width:600px;text-align:center;">28</div>
<div class="b" style="left:1px;top:749px;width:25px;height:1px;background:#dcdcdc;"></div>
<div class="t" style="top:735.67px;font-size:12.2px;color:#505050;left:-286.2px;width:600px;text-align:center;">29</div>
<div class="b" style="left:1px;top:766px;width:25px;height:1px;background:#dcdcdc;"></div>
<div class="t" style="top:752.67px;font-size:12.2px;color:#505050;left:-286.2px;width:600px;text-align:center;">30</div>
<div class="b" style="left:1px;top:783px;width:25px;height:1px;background:#dcdcdc;"></div>
<div class="t" style="top:769.67px;font-size:12.2px;color:#505050;left:-286.2px;width:600px;text-align:center;">31</div>
<div class="b" style="left:1px;top:800px;width:25px;height:1px;background:#dcdcdc;"></div>
<div class="t" style="top:786.67px;font-size:12.2px;color:#505050;left:-286.2px;width:600px;text-align:center;">32</div>
<div class="b" style="left:1px;top:817px;width:25px;height:1px;background:#dcdcdc;"></div>
<div class="t" style="top:803.67px;font-size:12.2px;color:#505050;left:-286.2px;width:600px;text-align:center;">33</div>
<div class="b" style="left:1px;top:834px;width:25px;height:1px;background:#dcdcdc;"></div>
<div class="t" style="top:820.67px;font-size:12.2px;color:#505050;left:-286.2px;width:600px;text-align:center;">34</div>
<div class="b" style="left:1px;top:851px;width:25px;height:1px;background:#dcdcdc;"></div>
<div class="t" style="top:837.67px;font-size:12.2px;color:#505050;left:-286.2px;width:600px;text-align:center;">35</div>
<div class="b" style="left:1px;top:868px;width:25px;height:1px;background:#dcdcdc;"></div>
<div class="t" style="top:854.67px;font-size:12.2px;color:#505050;left:-286.2px;width:600px;text-align:center;">36</div>
<div class="b" style="left:1px;top:885px;width:25px;height:1px;background:#dcdcdc;"></div>
<div class="t" style="top:871.67px;font-size:12.2px;color:#505050;left:-286.2px;width:600px;text-align:center;">37</div>
<div class="b" style="left:1px;top:902px;width:25px;height:1px;background:#dcdcdc;"></div>
<div class="t" style="top:888.67px;font-size:12.2px;color:#505050;left:-286.2px;width:600px;text-align:center;">38</div>
<div class="b" style="left:1px;top:919px;width:25px;height:1px;background:#dcdcdc;"></div>
<div class="t" style="top:905.67px;font-size:12.2px;color:#505050;left:-286.2px;width:600px;text-align:center;">39</div>
<div class="b" style="left:1px;top:936px;width:25px;height:1px;background:#dcdcdc;"></div>
<div class="t" style="top:922.67px;font-size:12.2px;color:#505050;left:-286.2px;width:600px;text-align:center;">40</div>
<div class="b" style="left:1px;top:953px;width:25px;height:1px;background:#dcdcdc;"></div>
<div class="t" style="top:939.67px;font-size:12.2px;color:#505050;left:-286.2px;width:600px;text-align:center;">41</div>
<div class="b" style="left:1px;top:970px;width:25px;height:1px;background:#dcdcdc;"></div>
<div class="t" style="top:956.67px;font-size:12.2px;color:#505050;left:-286.2px;width:600px;text-align:center;">42</div>
<div class="b" style="left:1px;top:987px;width:25px;height:1px;background:#dcdcdc;"></div>
<div class="t" style="top:973.67px;font-size:12.2px;color:#505050;left:-286.2px;width:600px;text-align:center;">43</div>
<div class="b" style="left:1px;top:1004px;width:25px;height:1px;background:#dcdcdc;"></div>
<div class="t" style="top:990.67px;font-size:12.2px;color:#505050;left:-286.2px;width:600px;text-align:center;">44</div>
<div class="b" style="left:1px;top:1021px;width:25px;height:1px;background:#dcdcdc;"></div>
<div class="t" style="top:1007.67px;font-size:12.2px;color:#505050;left:-286.2px;width:600px;text-align:center;">45</div>
<div class="b" style="left:1px;top:1038px;width:25px;height:1px;background:#dcdcdc;"></div>
<div class="t" style="top:1024.67px;font-size:12.2px;color:#505050;left:-286.2px;width:600px;text-align:center;">46</div>
<div class="b" style="left:1px;top:1055px;width:25px;height:1px;background:#dcdcdc;"></div>
<div class="t" style="top:1041.67px;font-size:12.2px;color:#505050;left:-286.2px;width:600px;text-align:center;">47</div>
<div class="b" style="left:27px;top:256px;width:1047px;height:1px;background:#e1e1e1;"></div>
<div class="b" style="left:27px;top:273px;width:1047px;height:1px;background:#e1e1e1;"></div>
<div class="b" style="left:90px;top:240px;width:1px;height:34px;background:#e1e1e1;"></div>
<div class="b" style="left:337px;top:240px;width:1px;height:34px;background:#e1e1e1;"></div>
<div class="b" style="left:549px;top:240px;width:1px;height:34px;background:#e1e1e1;"></div>
<div class="b" style="left:680px;top:240px;width:1px;height:34px;background:#e1e1e1;"></div>
<div class="b" style="left:811px;top:240px;width:1px;height:34px;background:#e1e1e1;"></div>
<div class="b" style="left:942px;top:240px;width:1px;height:34px;background:#e1e1e1;"></div>
<div class="b" style="left:1073px;top:240px;width:1px;height:34px;background:#e1e1e1;"></div>
<div class="b" style="left:26px;top:240px;width:311px;height:16px;background:#d9e1f2;"></div>
<div class="b" style="left:26px;top:256px;width:311px;height:1px;background:#8ea9db;"></div>
<div class="b" style="left:27px;top:240px;width:63px;height:16px;overflow:hidden;">
<div class="t" style="top:3.18px;font-size:11.6px;color:#000;letter-spacing:0px;left:2.3px;">Company Name</div>
</div>
<div class="t" style="top:243.18px;font-size:11.6px;color:#000;letter-spacing:0.3px;left:92.5px;">All</div>
<div class="b" style="left:320px;top:240px;width:17px;height:17px;background:linear-gradient(#fafafa,#eef0f4);border:1px solid #9a9a9a;box-sizing:border-box;"></div>
<svg class="b" style="left:324px;top:246px" width="9" height="5" viewBox="0 0 9 5"><path d="M0 0 H9 L4.5 5Z" fill="#555"/></svg>
<div class="b" style="left:26px;top:274px;width:1048px;height:33px;background:#d9e1f2;"></div>
<div class="b" style="left:26px;top:307px;width:1048px;height:1px;background:#8ea9db;"></div>
<div class="t" style="top:294.18px;font-size:11.6px;color:#000;font-weight:bold;letter-spacing:-0.5px;left:29px;">TB Sort</div>
<div class="b" style="left:73px;top:289px;width:17px;height:17px;background:linear-gradient(#fafafa,#eef0f4);border:1px solid #9a9a9a;box-sizing:border-box;"></div>
<svg class="b" style="left:77px;top:295px" width="9" height="5" viewBox="0 0 9 5"><path d="M0 0 H9 L4.5 5Z" fill="#555"/></svg>
<div class="t" style="top:294.18px;font-size:11.6px;color:#000;font-weight:bold;letter-spacing:-0.15px;left:92.5px;">Account (NUMBER•NAME) - Level 01</div>
<div class="b" style="left:320px;top:289px;width:17px;height:17px;background:linear-gradient(#fafafa,#eef0f4);border:1px solid #9a9a9a;box-sizing:border-box;"></div>
<svg class="b" style="left:324px;top:295px" width="9" height="5" viewBox="0 0 9 5"><path d="M0 0 H9 L4.5 5Z" fill="#555"/></svg>
<div class="t" style="top:294.18px;font-size:11.6px;color:#000;font-weight:bold;letter-spacing:-0.15px;left:339.5px;">Account (NUMBER•NAME) - Level 02</div>
<div class="t" style="top:277.18px;font-size:11.6px;color:#000;font-weight:bold;letter-spacing:-0.3px;left:314.5px;width:600px;text-align:center;">.Current Beginning TB</div>
<div class="t" style="top:294.18px;font-size:11.6px;color:#000;font-weight:bold;letter-spacing:0px;left:314.5px;width:600px;text-align:center;">Amount</div>
<div class="t" style="top:277.18px;font-size:11.6px;color:#000;font-weight:bold;letter-spacing:-0.3px;left:445.5px;width:600px;text-align:center;">.Current Activity</div>
<div class="t" style="top:294.18px;font-size:11.6px;color:#000;font-weight:bold;letter-spacing:0px;left:445.5px;width:600px;text-align:center;">Amount</div>
<div class="t" style="top:277.18px;font-size:11.6px;color:#000;font-weight:bold;letter-spacing:-0.3px;left:576.5px;width:600px;text-align:center;">.Current Activity</div>
<div class="t" style="top:294.18px;font-size:11.6px;color:#000;font-weight:bold;letter-spacing:0px;left:576.5px;width:600px;text-align:center;">Budget</div>
<div class="t" style="top:277.18px;font-size:11.6px;color:#000;font-weight:bold;letter-spacing:-0.3px;left:707.5px;width:600px;text-align:center;">.Current Ending TB</div>
<div class="t" style="top:294.18px;font-size:11.6px;color:#000;font-weight:bold;letter-spacing:0px;left:707.5px;width:600px;text-align:center;">Amount</div>
<div class="b" style="left:27px;top:308px;width:63px;height:17px;background:#d9d9d9;"></div>
<div class="b" style="left:90px;top:308px;width:247px;height:17px;background:#d9d9d9;"></div>
<div class="b" style="left:337px;top:308px;width:212px;height:17px;background:#d9d9d9;"></div>
<div class="b" style="left:549px;top:308px;width:131px;height:17px;background:#d9d9d9;"></div>
<div class="b" style="left:680px;top:308px;width:131px;height:17px;background:#d9d9d9;"></div>
<div class="b" style="left:811px;top:308px;width:131px;height:17px;background:#d9d9d9;"></div>
<div class="b" style="left:942px;top:308px;width:132px;height:17px;background:#d9d9d9;"></div>
<div class="t" style="top:311.18px;font-size:11.6px;color:#000;font-weight:bold;letter-spacing:0px;left:29.2px;">01</div>
<svg class="b" style="left:95px;top:312px" width="9" height="9" viewBox="0 0 9 9"><rect x="0.5" y="0.5" width="8" height="8" fill="#f4f6fa" stroke="#8ea2c8"/><rect x="2" y="4" width="5" height="1" fill="#2a3d66"/></svg>
<div class="t" style="top:311.18px;font-size:11.6px;color:#000;font-weight:bold;left:107.1px;"><span style="letter-spacing:0.66px">10000</span><span style="letter-spacing:-0.3px"> · </span><span style="letter-spacing:-0.15px">Banking</span></div>
<div class="t" style="top:311.18px;font-size:11.6px;color:#000;letter-spacing:0.3px;left:339.5px;">10001 · Operating Account</div>
<div class="t" style="top:311.18px;font-size:11.6px;color:#000;letter-spacing:0.38px;right:770.42px;">$38,416.30</div>
<div class="t" style="top:311.18px;font-size:11.6px;color:#000;letter-spacing:0.38px;right:639.42px;">($5,607.78)</div>
<div class="t" style="top:311.18px;font-size:11.6px;color:#000;letter-spacing:0.38px;right:508.41999999999996px;">$0.00</div>
<div class="t" style="top:311.18px;font-size:11.6px;color:#000;letter-spacing:0.38px;right:377.41999999999985px;">$32,808.52</div>
<div class="b" style="left:549px;top:324px;width:131px;height:18px;background:#d9d9d9;"></div>
<div class="b" style="left:811px;top:324px;width:131px;height:18px;background:#d9d9d9;"></div>
<div class="b" style="left:90px;top:325px;width:1px;height:16px;background:#e1e1e1;"></div>
<div class="b" style="left:337px;top:325px;width:1px;height:16px;background:#e1e1e1;"></div>
<div class="b" style="left:1073px;top:325px;width:1px;height:16px;background:#e1e1e1;"></div>
<div class="t" style="top:328.18px;font-size:11.6px;color:#000;letter-spacing:0.3px;left:339.5px;">10005 · Payroll Account</div>
<div class="t" style="top:328.18px;font-size:11.6px;color:#000;letter-spacing:0.38px;right:770.42px;">$54,601.02</div>
<div class="t" style="top:328.18px;font-size:11.6px;color:#000;letter-spacing:0.38px;right:639.42px;">$1,945.81</div>
<div class="t" style="top:328.18px;font-size:11.6px;color:#000;letter-spacing:0.38px;right:508.41999999999996px;">$0.00</div>
<div class="t" style="top:328.18px;font-size:11.6px;color:#000;letter-spacing:0.38px;right:377.41999999999985px;">$56,546.83</div>
<div class="b" style="left:27px;top:341px;width:63px;height:18px;background:#d9d9d9;"></div>
<div class="b" style="left:90px;top:341px;width:247px;height:18px;background:#d9d9d9;"></div>
<div class="b" style="left:337px;top:341px;width:212px;height:18px;background:#d9d9d9;"></div>
<div class="b" style="left:549px;top:341px;width:131px;height:18px;background:#d9d9d9;"></div>
<div class="b" style="left:680px;top:341px;width:131px;height:18px;background:#d9d9d9;"></div>
<div class="b" style="left:811px;top:341px;width:131px;height:18px;background:#d9d9d9;"></div>
<div class="b" style="left:942px;top:341px;width:132px;height:18px;background:#d9d9d9;"></div>
<div class="t" style="top:345.18px;font-size:11.6px;color:#000;letter-spacing:0.3px;left:339.5px;">10010 · Petty Cash</div>
<div class="t" style="top:345.18px;font-size:11.6px;color:#000;letter-spacing:0.38px;right:770.42px;">$12,306.92</div>
<div class="t" style="top:345.18px;font-size:11.6px;color:#000;letter-spacing:0.38px;right:639.42px;">($87.44)</div>
<div class="t" style="top:345.18px;font-size:11.6px;color:#000;letter-spacing:0.38px;right:508.41999999999996px;">$0.00</div>
<div class="t" style="top:345.18px;font-size:11.6px;color:#000;letter-spacing:0.38px;right:377.41999999999985px;">$12,219.48</div>
<div class="b" style="left:549px;top:358px;width:131px;height:18px;background:#d9d9d9;"></div>
<div class="b" style="left:811px;top:358px;width:131px;height:18px;background:#d9d9d9;"></div>
<div class="b" style="left:90px;top:359px;width:1px;height:16px;background:#e1e1e1;"></div>
<div class="b" style="left:337px;top:359px;width:1px;height:16px;background:#e1e1e1;"></div>
<div class="b" style="left:1073px;top:359px;width:1px;height:16px;background:#e1e1e1;"></div>
<div class="t" style="top:362.18px;font-size:11.6px;color:#000;font-weight:bold;letter-spacing:0px;left:29.2px;">02</div>
<div class="t" style="top:362.18px;font-size:11.6px;color:#000;font-weight:bold;left:93.1px;"><span style="letter-spacing:0.66px">11000</span><span style="letter-spacing:-0.3px"> · </span><span style="letter-spacing:-0.15px">Accounts Receivable</span></div>
<div class="t" style="top:362.18px;font-size:11.6px;color:#000;letter-spacing:0.38px;right:770.42px;">$132,752.43</div>
<div class="t" style="top:362.18px;font-size:11.6px;color:#000;letter-spacing:0.38px;right:639.42px;">($1,825.67)</div>
<div class="t" style="top:362.18px;font-size:11.6px;color:#000;letter-spacing:0.38px;right:508.41999999999996px;">$0.00</div>
<div class="t" style="top:362.18px;font-size:11.6px;color:#000;letter-spacing:0.38px;right:377.41999999999985px;">$130,926.76</div>
<div class="b" style="left:27px;top:375px;width:63px;height:18px;background:#d9d9d9;"></div>
<div class="b" style="left:90px;top:375px;width:247px;height:18px;background:#d9d9d9;"></div>
<div class="b" style="left:337px;top:375px;width:212px;height:18px;background:#d9d9d9;"></div>
<div class="b" style="left:549px;top:375px;width:131px;height:18px;background:#d9d9d9;"></div>
<div class="b" style="left:680px;top:375px;width:131px;height:18px;background:#d9d9d9;"></div>
<div class="b" style="left:811px;top:375px;width:131px;height:18px;background:#d9d9d9;"></div>
<div class="b" style="left:942px;top:375px;width:132px;height:18px;background:#d9d9d9;"></div>
<div class="t" style="top:379.18px;font-size:11.6px;color:#000;font-weight:bold;letter-spacing:0px;left:29.2px;">03</div>
<div class="t" style="top:379.18px;font-size:11.6px;color:#000;font-weight:bold;left:93.1px;"><span style="letter-spacing:0.66px">12000</span><span style="letter-spacing:-0.3px"> · </span><span style="letter-spacing:-0.15px">Undeposited Funds</span></div>
<div class="t" style="top:379.18px;font-size:11.6px;color:#000;letter-spacing:0.38px;right:770.42px;">$2,752.92</div>
<div class="t" style="top:379.18px;font-size:11.6px;color:#000;letter-spacing:0.38px;right:639.42px;">$2,345.67</div>
<div class="t" style="top:379.18px;font-size:11.6px;color:#000;letter-spacing:0.38px;right:508.41999999999996px;">$0.00</div>
<div class="t" style="top:379.18px;font-size:11.6px;color:#000;letter-spacing:0.38px;right:377.41999999999985px;">$5,098.59</div>
<div class="b" style="left:549px;top:392px;width:131px;height:18px;background:#d9d9d9;"></div>
<div class="b" style="left:811px;top:392px;width:131px;height:18px;background:#d9d9d9;"></div>
<div class="b" style="left:90px;top:393px;width:1px;height:16px;background:#e1e1e1;"></div>
<div class="b" style="left:337px;top:393px;width:1px;height:16px;background:#e1e1e1;"></div>
<div class="b" style="left:1073px;top:393px;width:1px;height:16px;background:#e1e1e1;"></div>
<div class="t" style="top:396.18px;font-size:11.6px;color:#000;font-weight:bold;left:93.1px;"><span style="letter-spacing:0.66px">12500</span><span style="letter-spacing:-0.3px"> · </span><span style="letter-spacing:-0.15px">Inventory Asset</span></div>
<div class="t" style="top:396.18px;font-size:11.6px;color:#000;letter-spacing:0.38px;right:770.42px;">$174,357.26</div>
<div class="t" style="top:396.18px;font-size:11.6px;color:#000;letter-spacing:0.38px;right:639.42px;">$1,049.76</div>
<div class="t" style="top:396.18px;font-size:11.6px;color:#000;letter-spacing:0.38px;right:508.41999999999996px;">$0.00</div>
<div class="t" style="top:396.18px;font-size:11.6px;color:#000;letter-spacing:0.38px;right:377.41999999999985px;">$175,407.02</div>
<div class="b" style="left:27px;top:409px;width:63px;height:18px;background:#d9d9d9;"></div>
<div class="b" style="left:90px;top:409px;width:247px;height:18px;background:#d9d9d9;"></div>
<div class="b" style="left:337px;top:409px;width:212px;height:18px;background:#d9d9d9;"></div>
<div class="b" style="left:549px;top:409px;width:131px;height:18px;background:#d9d9d9;"></div>
<div class="b" style="left:680px;top:409px;width:131px;height:18px;background:#d9d9d9;"></div>
<div class="b" style="left:811px;top:409px;width:131px;height:18px;background:#d9d9d9;"></div>
<div class="b" style="left:942px;top:409px;width:132px;height:18px;background:#d9d9d9;"></div>
<div class="t" style="top:413.18px;font-size:11.6px;color:#000;font-weight:bold;letter-spacing:0px;left:29.2px;">04</div>
<div class="t" style="top:413.18px;font-size:11.6px;color:#000;font-weight:bold;left:93.1px;"><span style="letter-spacing:0.66px">15000</span><span style="letter-spacing:-0.3px"> · </span><span style="letter-spacing:-0.15px">Furniture and Equipment</span></div>
<div class="t" style="top:413.18px;font-size:11.6px;color:#000;letter-spacing:0.38px;right:770.42px;">$95,736.51</div>
<div class="t" style="top:413.18px;font-size:11.6px;color:#000;letter-spacing:0.38px;right:639.42px;">$0.00</div>
<div class="t" style="top:413.18px;font-size:11.6px;color:#000;letter-spacing:0.38px;right:508.41999999999996px;">$0.00</div>
<div class="t" style="top:413.18px;font-size:11.6px;color:#000;letter-spacing:0.38px;right:377.41999999999985px;">$95,736.51</div>
<div class="b" style="left:549px;top:426px;width:131px;height:18px;background:#d9d9d9;"></div>
<div class="b" style="left:811px;top:426px;width:131px;height:18px;background:#d9d9d9;"></div>
<div class="b" style="left:90px;top:427px;width:1px;height:16px;background:#e1e1e1;"></div>
<div class="b" style="left:337px;top:427px;width:1px;height:16px;background:#e1e1e1;"></div>
<div class="b" style="left:1073px;top:427px;width:1px;height:16px;background:#e1e1e1;"></div>
<div class="t" style="top:430.18px;font-size:11.6px;color:#000;font-weight:bold;left:93.1px;"><span style="letter-spacing:0.66px">17000</span><span style="letter-spacing:-0.3px"> · </span><span style="letter-spacing:-0.15px">Accumulated Depreciation</span></div>
<div class="t" style="top:430.18px;font-size:11.6px;color:#000;letter-spacing:0.38px;right:770.42px;">($45,783.36)</div>
<div class="t" style="top:430.18px;font-size:11.6px;color:#000;letter-spacing:0.38px;right:639.42px;">($817.56)</div>
<div class="t" style="top:430.18px;font-size:11.6px;color:#000;letter-spacing:0.38px;right:508.41999999999996px;">$1,000.00</div>
<div class="t" style="top:430.18px;font-size:11.6px;color:#000;letter-spacing:0.38px;right:377.41999999999985px;">($46,600.92)</div>
<div class="b" style="left:27px;top:443px;width:63px;height:18px;background:#d9d9d9;"></div>
<div class="b" style="left:90px;top:443px;width:247px;height:18px;background:#d9d9d9;"></div>
<div class="b" style="left:337px;top:443px;width:212px;height:18px;background:#d9d9d9;"></div>
<div class="b" style="left:549px;top:443px;width:131px;height:18px;background:#d9d9d9;"></div>
<div class="b" style="left:680px;top:443px;width:131px;height:18px;background:#d9d9d9;"></div>
<div class="b" style="left:811px;top:443px;width:131px;height:18px;background:#d9d9d9;"></div>
<div class="b" style="left:942px;top:443px;width:132px;height:18px;background:#d9d9d9;"></div>
<div class="t" style="top:447.18px;font-size:11.6px;color:#000;font-weight:bold;letter-spacing:0px;left:29.2px;">05</div>
<div class="t" style="top:447.18px;font-size:11.6px;color:#000;font-weight:bold;left:93.1px;"><span style="letter-spacing:0.66px">18000</span><span style="letter-spacing:-0.3px"> · </span><span style="letter-spacing:-0.15px">Security Deposit</span></div>
<div class="t" style="top:447.18px;font-size:11.6px;color:#000;letter-spacing:0.38px;right:770.42px;">$14,980.00</div>
<div class="t" style="top:447.18px;font-size:11.6px;color:#000;letter-spacing:0.38px;right:639.42px;">$0.00</div>
<div class="t" style="top:447.18px;font-size:11.6px;color:#000;letter-spacing:0.38px;right:508.41999999999996px;">$0.00</div>
<div class="t" style="top:447.18px;font-size:11.6px;color:#000;letter-spacing:0.38px;right:377.41999999999985px;">$14,980.00</div>
<div class="b" style="left:549px;top:460px;width:131px;height:18px;background:#d9d9d9;"></div>
<div class="b" style="left:811px;top:460px;width:131px;height:18px;background:#d9d9d9;"></div>
<div class="b" style="left:90px;top:461px;width:1px;height:16px;background:#e1e1e1;"></div>
<div class="b" style="left:337px;top:461px;width:1px;height:16px;background:#e1e1e1;"></div>
<div class="b" style="left:1073px;top:461px;width:1px;height:16px;background:#e1e1e1;"></div>
<div class="t" style="top:464.18px;font-size:11.6px;color:#000;font-weight:bold;letter-spacing:0px;left:29.2px;">06</div>
<div class="t" style="top:464.18px;font-size:11.6px;color:#000;font-weight:bold;left:93.1px;"><span style="letter-spacing:0.66px">20000</span><span style="letter-spacing:-0.3px"> · </span><span style="letter-spacing:-0.15px">Accounts Payable</span></div>
<div class="t" style="top:464.18px;font-size:11.6px;color:#000;letter-spacing:0.38px;right:770.42px;">($40,392.57)</div>
<div class="t" style="top:464.18px;font-size:11.6px;color:#000;letter-spacing:0.38px;right:639.42px;">$1,000.00</div>
<div class="t" style="top:464.18px;font-size:11.6px;color:#000;letter-spacing:0.38px;right:508.41999999999996px;">$0.00</div>
<div class="t" style="top:464.18px;font-size:11.6px;color:#000;letter-spacing:0.38px;right:377.41999999999985px;">($39,392.57)</div>
<div class="b" style="left:27px;top:477px;width:63px;height:18px;background:#d9d9d9;"></div>
<div class="b" style="left:90px;top:477px;width:247px;height:18px;background:#d9d9d9;"></div>
<div class="b" style="left:337px;top:477px;width:212px;height:18px;background:#d9d9d9;"></div>
<div class="b" style="left:549px;top:477px;width:131px;height:18px;background:#d9d9d9;"></div>
<div class="b" style="left:680px;top:477px;width:131px;height:18px;background:#d9d9d9;"></div>
<div class="b" style="left:811px;top:477px;width:131px;height:18px;background:#d9d9d9;"></div>
<div class="b" style="left:942px;top:477px;width:132px;height:18px;background:#d9d9d9;"></div>
<div class="t" style="top:481.18px;font-size:11.6px;color:#000;font-weight:bold;letter-spacing:0px;left:29.2px;">07</div>
<svg class="b" style="left:95px;top:482px" width="9" height="9" viewBox="0 0 9 9"><rect x="0.5" y="0.5" width="8" height="8" fill="#f4f6fa" stroke="#8ea2c8"/><rect x="2" y="4" width="5" height="1" fill="#2a3d66"/></svg>
<div class="t" style="top:481.18px;font-size:11.6px;color:#000;font-weight:bold;left:107.1px;"><span style="letter-spacing:0.66px">21000</span><span style="letter-spacing:-0.3px"> · </span><span style="letter-spacing:-0.15px">Credit Cards</span></div>
<div class="t" style="top:481.18px;font-size:11.6px;color:#000;letter-spacing:0.3px;left:339.5px;">21001 · Amex Biz</div>
<div class="t" style="top:481.18px;font-size:11.6px;color:#000;letter-spacing:0.38px;right:770.42px;">($27,995.32)</div>
<div class="t" style="top:481.18px;font-size:11.6px;color:#000;letter-spacing:0.38px;right:639.42px;">($953.94)</div>
<div class="t" style="top:481.18px;font-size:11.6px;color:#000;letter-spacing:0.38px;right:508.41999999999996px;">$0.00</div>
<div class="t" style="top:481.18px;font-size:11.6px;color:#000;letter-spacing:0.38px;right:377.41999999999985px;">($28,949.26)</div>
<div class="b" style="left:549px;top:494px;width:131px;height:18px;background:#d9d9d9;"></div>
<div class="b" style="left:811px;top:494px;width:131px;height:18px;background:#d9d9d9;"></div>
<div class="b" style="left:90px;top:495px;width:1px;height:16px;background:#e1e1e1;"></div>
<div class="b" style="left:337px;top:495px;width:1px;height:16px;background:#e1e1e1;"></div>
<div class="b" style="left:1073px;top:495px;width:1px;height:16px;background:#e1e1e1;"></div>
<div class="t" style="top:498.18px;font-size:11.6px;color:#000;letter-spacing:0.3px;left:339.5px;">21005 · Capital One</div>
<div class="t" style="top:498.18px;font-size:11.6px;color:#000;letter-spacing:0.38px;right:770.42px;">($55,035.20)</div>
<div class="t" style="top:498.18px;font-size:11.6px;color:#000;letter-spacing:0.38px;right:639.42px;">$763.13</div>
<div class="t" style="top:498.18px;font-size:11.6px;color:#000;letter-spacing:0.38px;right:508.41999999999996px;">$0.00</div>
<div class="t" style="top:498.18px;font-size:11.6px;color:#000;letter-spacing:0.38px;right:377.41999999999985px;">($54,272.07)</div>
<div class="b" style="left:27px;top:511px;width:63px;height:18px;background:#d9d9d9;"></div>
<div class="b" style="left:90px;top:511px;width:247px;height:18px;background:#d9d9d9;"></div>
<div class="b" style="left:337px;top:511px;width:212px;height:18px;background:#d9d9d9;"></div>
<div class="b" style="left:549px;top:511px;width:131px;height:18px;background:#d9d9d9;"></div>
<div class="b" style="left:680px;top:511px;width:131px;height:18px;background:#d9d9d9;"></div>
<div class="b" style="left:811px;top:511px;width:131px;height:18px;background:#d9d9d9;"></div>
<div class="b" style="left:942px;top:511px;width:132px;height:18px;background:#d9d9d9;"></div>
<div class="t" style="top:515.18px;font-size:11.6px;color:#000;letter-spacing:0.3px;left:339.5px;">21010 · Discover</div>
<div class="t" style="top:515.18px;font-size:11.6px;color:#000;letter-spacing:0.38px;right:770.42px;">($19,076.01)</div>
<div class="t" style="top:515.18px;font-size:11.6px;color:#000;letter-spacing:0.38px;right:639.42px;">$92.55</div>
<div class="t" style="top:515.18px;font-size:11.6px;color:#000;letter-spacing:0.38px;right:508.41999999999996px;">$0.00</div>
<div class="t" style="top:515.18px;font-size:11.6px;color:#000;letter-spacing:0.38px;right:377.41999999999985px;">($18,983.46)</div>
<div class="b" style="left:549px;top:528px;width:131px;height:18px;background:#d9d9d9;"></div>
<div class="b" style="left:811px;top:528px;width:131px;height:18px;background:#d9d9d9;"></div>
<div class="b" style="left:90px;top:529px;width:1px;height:16px;background:#e1e1e1;"></div>
<div class="b" style="left:337px;top:529px;width:1px;height:16px;background:#e1e1e1;"></div>
<div class="b" style="left:1073px;top:529px;width:1px;height:16px;background:#e1e1e1;"></div>
<div class="t" style="top:532.18px;font-size:11.6px;color:#000;font-weight:bold;letter-spacing:0px;left:29.2px;">08</div>
<div class="t" style="top:532.18px;font-size:11.6px;color:#000;font-weight:bold;left:93.1px;"><span style="letter-spacing:0.66px">25000</span><span style="letter-spacing:-0.3px"> · </span><span style="letter-spacing:-0.15px">Office Supply Line of Credit</span></div>
<div class="t" style="top:532.18px;font-size:11.6px;color:#000;letter-spacing:0.38px;right:770.42px;">($58.15)</div>
<div class="t" style="top:532.18px;font-size:11.6px;color:#000;letter-spacing:0.38px;right:639.42px;">$0.00</div>
<div class="t" style="top:532.18px;font-size:11.6px;color:#000;letter-spacing:0.38px;right:508.41999999999996px;">$1,000.00</div>
<div class="t" style="top:532.18px;font-size:11.6px;color:#000;letter-spacing:0.38px;right:377.41999999999985px;">($58.15)</div>
<div class="b" style="left:27px;top:545px;width:63px;height:18px;background:#d9d9d9;"></div>
<div class="b" style="left:90px;top:545px;width:247px;height:18px;background:#d9d9d9;"></div>
<div class="b" style="left:337px;top:545px;width:212px;height:18px;background:#d9d9d9;"></div>
<div class="b" style="left:549px;top:545px;width:131px;height:18px;background:#d9d9d9;"></div>
<div class="b" style="left:680px;top:545px;width:131px;height:18px;background:#d9d9d9;"></div>
<div class="b" style="left:811px;top:545px;width:131px;height:18px;background:#d9d9d9;"></div>
<div class="b" style="left:942px;top:545px;width:132px;height:18px;background:#d9d9d9;"></div>
<div class="t" style="top:549.18px;font-size:11.6px;color:#000;font-weight:bold;letter-spacing:0px;left:29.2px;">09</div>
<div class="t" style="top:549.18px;font-size:11.6px;color:#000;font-weight:bold;left:93.1px;"><span style="letter-spacing:0.66px">27000</span><span style="letter-spacing:-0.3px"> · </span><span style="letter-spacing:-0.15px">Installment Loan</span></div>
<div class="t" style="top:549.18px;font-size:11.6px;color:#000;letter-spacing:0.38px;right:770.42px;">($82,208.27)</div>
<div class="t" style="top:549.18px;font-size:11.6px;color:#000;letter-spacing:0.38px;right:639.42px;">$1,996.47</div>
<div class="t" style="top:549.18px;font-size:11.6px;color:#000;letter-spacing:0.38px;right:508.41999999999996px;">$2,000.00</div>
<div class="t" style="top:549.18px;font-size:11.6px;color:#000;letter-spacing:0.38px;right:377.41999999999985px;">($80,211.80)</div>
<div class="b" style="left:549px;top:562px;width:131px;height:18px;background:#d9d9d9;"></div>
<div class="b" style="left:811px;top:562px;width:131px;height:18px;background:#d9d9d9;"></div>
<div class="b" style="left:90px;top:563px;width:1px;height:16px;background:#e1e1e1;"></div>
<div class="b" style="left:337px;top:563px;width:1px;height:16px;background:#e1e1e1;"></div>
<div class="b" style="left:1073px;top:563px;width:1px;height:16px;background:#e1e1e1;"></div>
<div class="t" style="top:566.18px;font-size:11.6px;color:#000;font-weight:bold;letter-spacing:0px;left:29.2px;">10</div>
<div class="t" style="top:566.18px;font-size:11.6px;color:#000;font-weight:bold;left:93.1px;"><span style="letter-spacing:0.66px">31000</span><span style="letter-spacing:-0.3px"> · </span><span style="letter-spacing:-0.15px">Shareholder Contributions</span></div>
<div class="t" style="top:566.18px;font-size:11.6px;color:#000;letter-spacing:0.38px;right:770.42px;">($86,000.00)</div>
<div class="t" style="top:566.18px;font-size:11.6px;color:#000;letter-spacing:0.38px;right:639.42px;">$0.00</div>
<div class="t" style="top:566.18px;font-size:11.6px;color:#000;letter-spacing:0.38px;right:508.41999999999996px;">$0.00</div>
<div class="t" style="top:566.18px;font-size:11.6px;color:#000;letter-spacing:0.38px;right:377.41999999999985px;">($86,000.00)</div>
<div class="b" style="left:27px;top:579px;width:63px;height:18px;background:#d9d9d9;"></div>
<div class="b" style="left:90px;top:579px;width:247px;height:18px;background:#d9d9d9;"></div>
<div class="b" style="left:337px;top:579px;width:212px;height:18px;background:#d9d9d9;"></div>
<div class="b" style="left:549px;top:579px;width:131px;height:18px;background:#d9d9d9;"></div>
<div class="b" style="left:680px;top:579px;width:131px;height:18px;background:#d9d9d9;"></div>
<div class="b" style="left:811px;top:579px;width:131px;height:18px;background:#d9d9d9;"></div>
<div class="b" style="left:942px;top:579px;width:132px;height:18px;background:#d9d9d9;"></div>
<div class="t" style="top:583.18px;font-size:11.6px;color:#000;font-weight:bold;left:93.1px;"><span style="letter-spacing:0.66px">31400</span><span style="letter-spacing:-0.3px"> · </span><span style="letter-spacing:-0.15px">Shareholder Distributions</span></div>
<div class="t" style="top:583.18px;font-size:11.6px;color:#000;letter-spacing:0.38px;right:770.42px;">$18,015.46</div>
<div class="t" style="top:583.18px;font-size:11.6px;color:#000;letter-spacing:0.38px;right:639.42px;">$619.00</div>
<div class="t" style="top:583.18px;font-size:11.6px;color:#000;letter-spacing:0.38px;right:508.41999999999996px;">$0.00</div>
<div class="t" style="top:583.18px;font-size:11.6px;color:#000;letter-spacing:0.38px;right:377.41999999999985px;">$18,634.46</div>
<div class="b" style="left:549px;top:596px;width:131px;height:18px;background:#d9d9d9;"></div>
<div class="b" style="left:811px;top:596px;width:131px;height:18px;background:#d9d9d9;"></div>
<div class="b" style="left:90px;top:597px;width:1px;height:16px;background:#e1e1e1;"></div>
<div class="b" style="left:337px;top:597px;width:1px;height:16px;background:#e1e1e1;"></div>
<div class="b" style="left:1073px;top:597px;width:1px;height:16px;background:#e1e1e1;"></div>
<div class="t" style="top:600.18px;font-size:11.6px;color:#000;font-weight:bold;left:93.1px;"><span style="letter-spacing:0.66px">32000</span><span style="letter-spacing:-0.3px"> · </span><span style="letter-spacing:-0.15px">Retained Earnings</span></div>
<div class="t" style="top:600.18px;font-size:11.6px;color:#000;letter-spacing:0.38px;right:770.42px;">($91,814.89)</div>
<div class="t" style="top:600.18px;font-size:11.6px;color:#000;letter-spacing:0.38px;right:639.42px;">$14,121.63</div>
<div class="t" style="top:600.18px;font-size:11.6px;color:#000;letter-spacing:0.38px;right:508.41999999999996px;">$0.00</div>
<div class="t" style="top:600.18px;font-size:11.6px;color:#000;letter-spacing:0.38px;right:377.41999999999985px;">($77,693.26)</div>
<div class="b" style="left:27px;top:613px;width:63px;height:18px;background:#d9d9d9;"></div>
<div class="b" style="left:90px;top:613px;width:247px;height:18px;background:#d9d9d9;"></div>
<div class="b" style="left:337px;top:613px;width:212px;height:18px;background:#d9d9d9;"></div>
<div class="b" style="left:549px;top:613px;width:131px;height:18px;background:#d9d9d9;"></div>
<div class="b" style="left:680px;top:613px;width:131px;height:18px;background:#d9d9d9;"></div>
<div class="b" style="left:811px;top:613px;width:131px;height:18px;background:#d9d9d9;"></div>
<div class="b" style="left:942px;top:613px;width:132px;height:18px;background:#d9d9d9;"></div>
<div class="t" style="top:617.18px;font-size:11.6px;color:#000;font-weight:bold;letter-spacing:0px;left:29.2px;">11</div>
<div class="t" style="top:617.18px;font-size:11.6px;color:#000;font-weight:bold;left:93.1px;"><span style="letter-spacing:0.66px">40000</span><span style="letter-spacing:-0.3px"> · </span><span style="letter-spacing:-0.15px">Sales - New</span></div>
<div class="t" style="top:617.18px;font-size:11.6px;color:#000;letter-spacing:0.38px;right:770.42px;">($1,646,254.28)</div>
<div class="t" style="top:617.18px;font-size:11.6px;color:#000;letter-spacing:0.38px;right:639.42px;">($178,684.43)</div>
<div class="t" style="top:617.18px;font-size:11.6px;color:#000;letter-spacing:0.38px;right:508.41999999999996px;">($247,382.57)</div>
<div class="t" style="top:617.18px;font-size:11.6px;color:#000;letter-spacing:0.38px;right:377.41999999999985px;">($1,824,938.71)</div>
<div class="b" style="left:549px;top:630px;width:131px;height:18px;background:#d9d9d9;"></div>
<div class="b" style="left:811px;top:630px;width:131px;height:18px;background:#d9d9d9;"></div>
<div class="b" style="left:90px;top:631px;width:1px;height:16px;background:#e1e1e1;"></div>
<div class="b" style="left:337px;top:631px;width:1px;height:16px;background:#e1e1e1;"></div>
<div class="b" style="left:1073px;top:631px;width:1px;height:16px;background:#e1e1e1;"></div>
<div class="t" style="top:634.18px;font-size:11.6px;color:#000;font-weight:bold;left:93.1px;"><span style="letter-spacing:0.66px">48900</span><span style="letter-spacing:-0.3px"> · </span><span style="letter-spacing:-0.15px">Sales - Refurbishing</span></div>
<div class="t" style="top:634.18px;font-size:11.6px;color:#000;letter-spacing:0.38px;right:770.42px;">($94,082.06)</div>
<div class="t" style="top:634.18px;font-size:11.6px;color:#000;letter-spacing:0.38px;right:639.42px;">($11,639.97)</div>
<div class="t" style="top:634.18px;font-size:11.6px;color:#000;letter-spacing:0.38px;right:508.41999999999996px;">($9,739.21)</div>
<div class="t" style="top:634.18px;font-size:11.6px;color:#000;letter-spacing:0.38px;right:377.41999999999985px;">($105,722.03)</div>
<div class="b" style="left:27px;top:647px;width:63px;height:18px;background:#d9d9d9;"></div>
<div class="b" style="left:90px;top:647px;width:247px;height:18px;background:#d9d9d9;"></div>
<div class="b" style="left:337px;top:647px;width:212px;height:18px;background:#d9d9d9;"></div>
<div class="b" style="left:549px;top:647px;width:131px;height:18px;background:#d9d9d9;"></div>
<div class="b" style="left:680px;top:647px;width:131px;height:18px;background:#d9d9d9;"></div>
<div class="b" style="left:811px;top:647px;width:131px;height:18px;background:#d9d9d9;"></div>
<div class="b" style="left:942px;top:647px;width:132px;height:18px;background:#d9d9d9;"></div>
<div class="t" style="top:651.18px;font-size:11.6px;color:#000;font-weight:bold;letter-spacing:0px;left:29.2px;">12</div>
<div class="t" style="top:651.18px;font-size:11.6px;color:#000;font-weight:bold;left:93.1px;"><span style="letter-spacing:0.66px">50000</span><span style="letter-spacing:-0.3px"> · </span><span style="letter-spacing:-0.15px">Cost of Goods Sold</span></div>
<div class="t" style="top:651.18px;font-size:11.6px;color:#000;letter-spacing:0.38px;right:770.42px;">$1,148,804.53</div>
<div class="t" style="top:651.18px;font-size:11.6px;color:#000;letter-spacing:0.38px;right:639.42px;">$112,428.41</div>
<div class="t" style="top:651.18px;font-size:11.6px;color:#000;letter-spacing:0.38px;right:508.41999999999996px;">$158,439.01</div>
<div class="t" style="top:651.18px;font-size:11.6px;color:#000;letter-spacing:0.38px;right:377.41999999999985px;">$1,261,232.94</div>
<div class="b" style="left:549px;top:664px;width:131px;height:18px;background:#d9d9d9;"></div>
<div class="b" style="left:811px;top:664px;width:131px;height:18px;background:#d9d9d9;"></div>
<div class="b" style="left:90px;top:665px;width:1px;height:16px;background:#e1e1e1;"></div>
<div class="b" style="left:337px;top:665px;width:1px;height:16px;background:#e1e1e1;"></div>
<div class="b" style="left:1073px;top:665px;width:1px;height:16px;background:#e1e1e1;"></div>
<div class="t" style="top:668.18px;font-size:11.6px;color:#000;font-weight:bold;left:93.1px;"><span style="letter-spacing:0.66px">51100</span><span style="letter-spacing:-0.3px"> · </span><span style="letter-spacing:-0.15px">Direct Labor Costs</span></div>
<div class="t" style="top:668.18px;font-size:11.6px;color:#000;letter-spacing:0.38px;right:770.42px;">$80,023.27</div>
<div class="t" style="top:668.18px;font-size:11.6px;color:#000;letter-spacing:0.38px;right:639.42px;">$10,038.32</div>
<div class="t" style="top:668.18px;font-size:11.6px;color:#000;letter-spacing:0.38px;right:508.41999999999996px;">$8,861.81</div>
<div class="t" style="top:668.18px;font-size:11.6px;color:#000;letter-spacing:0.38px;right:377.41999999999985px;">$90,061.59</div>
<div class="b" style="left:27px;top:681px;width:63px;height:18px;background:#d9d9d9;"></div>
<div class="b" style="left:90px;top:681px;width:247px;height:18px;background:#d9d9d9;"></div>
<div class="b" style="left:337px;top:681px;width:212px;height:18px;background:#d9d9d9;"></div>
<div class="b" style="left:549px;top:681px;width:131px;height:18px;background:#d9d9d9;"></div>
<div class="b" style="left:680px;top:681px;width:131px;height:18px;background:#d9d9d9;"></div>
<div class="b" style="left:811px;top:681px;width:131px;height:18px;background:#d9d9d9;"></div>
<div class="b" style="left:942px;top:681px;width:132px;height:18px;background:#d9d9d9;"></div>
<div class="t" style="top:685.18px;font-size:11.6px;color:#000;font-weight:bold;left:93.1px;"><span style="letter-spacing:0.66px">51800</span><span style="letter-spacing:-0.3px"> · </span><span style="letter-spacing:-0.15px">Merchant Account Fees</span></div>
<div class="t" style="top:685.18px;font-size:11.6px;color:#000;letter-spacing:0.38px;right:770.42px;">$21,904.20</div>
<div class="t" style="top:685.18px;font-size:11.6px;color:#000;letter-spacing:0.38px;right:639.42px;">$2,617.93</div>
<div class="t" style="top:685.18px;font-size:11.6px;color:#000;letter-spacing:0.38px;right:508.41999999999996px;">$2,680.35</div>
<div class="t" style="top:685.18px;font-size:11.6px;color:#000;letter-spacing:0.38px;right:377.41999999999985px;">$24,522.13</div>
<div class="b" style="left:549px;top:698px;width:131px;height:18px;background:#d9d9d9;"></div>
<div class="b" style="left:811px;top:698px;width:131px;height:18px;background:#d9d9d9;"></div>
<div class="b" style="left:90px;top:699px;width:1px;height:16px;background:#e1e1e1;"></div>
<div class="b" style="left:337px;top:699px;width:1px;height:16px;background:#e1e1e1;"></div>
<div class="b" style="left:1073px;top:699px;width:1px;height:16px;background:#e1e1e1;"></div>
<div class="t" style="top:702.18px;font-size:11.6px;color:#000;font-weight:bold;left:93.1px;"><span style="letter-spacing:0.66px">52300</span><span style="letter-spacing:-0.3px"> · </span><span style="letter-spacing:-0.15px">Other Direct Costs</span></div>
<div class="t" style="top:702.18px;font-size:11.6px;color:#000;letter-spacing:0.38px;right:770.42px;">$27,466.57</div>
<div class="t" style="top:702.18px;font-size:11.6px;color:#000;letter-spacing:0.38px;right:639.42px;">$2,145.28</div>
<div class="t" style="top:702.18px;font-size:11.6px;color:#000;letter-spacing:0.38px;right:508.41999999999996px;">$1,416.02</div>
<div class="t" style="top:702.18px;font-size:11.6px;color:#000;letter-spacing:0.38px;right:377.41999999999985px;">$29,611.85</div>
<div class="b" style="left:27px;top:715px;width:63px;height:18px;background:#d9d9d9;"></div>
<div class="b" style="left:90px;top:715px;width:247px;height:18px;background:#d9d9d9;"></div>
<div class="b" style="left:337px;top:715px;width:212px;height:18px;background:#d9d9d9;"></div>
<div class="b" style="left:549px;top:715px;width:131px;height:18px;background:#d9d9d9;"></div>
<div class="b" style="left:680px;top:715px;width:131px;height:18px;background:#d9d9d9;"></div>
<div class="b" style="left:811px;top:715px;width:131px;height:18px;background:#d9d9d9;"></div>
<div class="b" style="left:942px;top:715px;width:132px;height:18px;background:#d9d9d9;"></div>
<div class="t" style="top:719.18px;font-size:11.6px;color:#000;font-weight:bold;letter-spacing:0px;left:29.2px;">13</div>
<div class="t" style="top:719.18px;font-size:11.6px;color:#000;font-weight:bold;left:93.1px;"><span style="letter-spacing:0.66px">60000</span><span style="letter-spacing:-0.3px"> · </span><span style="letter-spacing:-0.15px">Advertising and Promotion</span></div>
<div class="t" style="top:719.18px;font-size:11.6px;color:#000;letter-spacing:0.38px;right:770.42px;">$9,043.03</div>
<div class="t" style="top:719.18px;font-size:11.6px;color:#000;letter-spacing:0.38px;right:639.42px;">$1,800.77</div>
<div class="t" style="top:719.18px;font-size:11.6px;color:#000;letter-spacing:0.38px;right:508.41999999999996px;">$809.19</div>
<div class="t" style="top:719.18px;font-size:11.6px;color:#000;letter-spacing:0.38px;right:377.41999999999985px;">$10,843.80</div>
<div class="b" style="left:549px;top:732px;width:131px;height:18px;background:#d9d9d9;"></div>
<div class="b" style="left:811px;top:732px;width:131px;height:18px;background:#d9d9d9;"></div>
<div class="b" style="left:90px;top:733px;width:1px;height:16px;background:#e1e1e1;"></div>
<div class="b" style="left:337px;top:733px;width:1px;height:16px;background:#e1e1e1;"></div>
<div class="b" style="left:1073px;top:733px;width:1px;height:16px;background:#e1e1e1;"></div>
<div class="t" style="top:736.18px;font-size:11.6px;color:#000;font-weight:bold;left:93.1px;"><span style="letter-spacing:0.66px">60200</span><span style="letter-spacing:-0.3px"> · </span><span style="letter-spacing:-0.15px">Automobile Expense</span></div>
<div class="t" style="top:736.18px;font-size:11.6px;color:#000;letter-spacing:0.38px;right:770.42px;">$6,634.77</div>
<div class="t" style="top:736.18px;font-size:11.6px;color:#000;letter-spacing:0.38px;right:639.42px;">$738.27</div>
<div class="t" style="top:736.18px;font-size:11.6px;color:#000;letter-spacing:0.38px;right:508.41999999999996px;">$739.90</div>
<div class="t" style="top:736.18px;font-size:11.6px;color:#000;letter-spacing:0.38px;right:377.41999999999985px;">$7,373.04</div>
<div class="b" style="left:27px;top:749px;width:63px;height:18px;background:#d9d9d9;"></div>
<div class="b" style="left:90px;top:749px;width:247px;height:18px;background:#d9d9d9;"></div>
<div class="b" style="left:337px;top:749px;width:212px;height:18px;background:#d9d9d9;"></div>
<div class="b" style="left:549px;top:749px;width:131px;height:18px;background:#d9d9d9;"></div>
<div class="b" style="left:680px;top:749px;width:131px;height:18px;background:#d9d9d9;"></div>
<div class="b" style="left:811px;top:749px;width:131px;height:18px;background:#d9d9d9;"></div>
<div class="b" style="left:942px;top:749px;width:132px;height:18px;background:#d9d9d9;"></div>
<div class="t" style="top:753.18px;font-size:11.6px;color:#000;font-weight:bold;left:93.1px;"><span style="letter-spacing:0.66px">60400</span><span style="letter-spacing:-0.3px"> · </span><span style="letter-spacing:-0.15px">Bank Service Charges</span></div>
<div class="t" style="top:753.18px;font-size:11.6px;color:#000;letter-spacing:0.38px;right:770.42px;">$1,945.00</div>
<div class="t" style="top:753.18px;font-size:11.6px;color:#000;letter-spacing:0.38px;right:639.42px;">$210.00</div>
<div class="t" style="top:753.18px;font-size:11.6px;color:#000;letter-spacing:0.38px;right:508.41999999999996px;">$0.00</div>
<div class="t" style="top:753.18px;font-size:11.6px;color:#000;letter-spacing:0.38px;right:377.41999999999985px;">$2,155.00</div>
<div class="b" style="left:549px;top:766px;width:131px;height:18px;background:#d9d9d9;"></div>
<div class="b" style="left:811px;top:766px;width:131px;height:18px;background:#d9d9d9;"></div>
<div class="b" style="left:90px;top:767px;width:1px;height:16px;background:#e1e1e1;"></div>
<div class="b" style="left:337px;top:767px;width:1px;height:16px;background:#e1e1e1;"></div>
<div class="b" style="left:1073px;top:767px;width:1px;height:16px;background:#e1e1e1;"></div>
<div class="t" style="top:770.18px;font-size:11.6px;color:#000;font-weight:bold;left:93.1px;"><span style="letter-spacing:0.66px">61700</span><span style="letter-spacing:-0.3px"> · </span><span style="letter-spacing:-0.15px">Computer and Internet Expenses</span></div>
<div class="t" style="top:770.18px;font-size:11.6px;color:#000;letter-spacing:0.38px;right:770.42px;">$11,156.38</div>
<div class="t" style="top:770.18px;font-size:11.6px;color:#000;letter-spacing:0.38px;right:639.42px;">$1,613.48</div>
<div class="t" style="top:770.18px;font-size:11.6px;color:#000;letter-spacing:0.38px;right:508.41999999999996px;">$1,413.94</div>
<div class="t" style="top:770.18px;font-size:11.6px;color:#000;letter-spacing:0.38px;right:377.41999999999985px;">$12,769.86</div>
<div class="b" style="left:27px;top:783px;width:63px;height:18px;background:#d9d9d9;"></div>
<div class="b" style="left:90px;top:783px;width:247px;height:18px;background:#d9d9d9;"></div>
<div class="b" style="left:337px;top:783px;width:212px;height:18px;background:#d9d9d9;"></div>
<div class="b" style="left:549px;top:783px;width:131px;height:18px;background:#d9d9d9;"></div>
<div class="b" style="left:680px;top:783px;width:131px;height:18px;background:#d9d9d9;"></div>
<div class="b" style="left:811px;top:783px;width:131px;height:18px;background:#d9d9d9;"></div>
<div class="b" style="left:942px;top:783px;width:132px;height:18px;background:#d9d9d9;"></div>
<div class="t" style="top:787.18px;font-size:11.6px;color:#000;font-weight:bold;left:93.1px;"><span style="letter-spacing:0.66px">62400</span><span style="letter-spacing:-0.3px"> · </span><span style="letter-spacing:-0.15px">Depreciation Expense</span></div>
<div class="t" style="top:787.18px;font-size:11.6px;color:#000;letter-spacing:0.38px;right:770.42px;">$8,993.16</div>
<div class="t" style="top:787.18px;font-size:11.6px;color:#000;letter-spacing:0.38px;right:639.42px;">$817.56</div>
<div class="t" style="top:787.18px;font-size:11.6px;color:#000;letter-spacing:0.38px;right:508.41999999999996px;">$817.56</div>
<div class="t" style="top:787.18px;font-size:11.6px;color:#000;letter-spacing:0.38px;right:377.41999999999985px;">$9,810.72</div>
<div class="b" style="left:549px;top:800px;width:131px;height:18px;background:#d9d9d9;"></div>
<div class="b" style="left:811px;top:800px;width:131px;height:18px;background:#d9d9d9;"></div>
<div class="b" style="left:90px;top:801px;width:1px;height:16px;background:#e1e1e1;"></div>
<div class="b" style="left:337px;top:801px;width:1px;height:16px;background:#e1e1e1;"></div>
<div class="b" style="left:1073px;top:801px;width:1px;height:16px;background:#e1e1e1;"></div>
<div class="t" style="top:804.18px;font-size:11.6px;color:#000;font-weight:bold;left:93.1px;"><span style="letter-spacing:0.66px">62500</span><span style="letter-spacing:-0.3px"> · </span><span style="letter-spacing:-0.15px">Dues and Subscriptions</span></div>
<div class="t" style="top:804.18px;font-size:11.6px;color:#000;letter-spacing:0.38px;right:770.42px;">$2,352.47</div>
<div class="t" style="top:804.18px;font-size:11.6px;color:#000;letter-spacing:0.38px;right:639.42px;">$373.55</div>
<div class="t" style="top:804.18px;font-size:11.6px;color:#000;letter-spacing:0.38px;right:508.41999999999996px;">$175.83</div>
<div class="t" style="top:804.18px;font-size:11.6px;color:#000;letter-spacing:0.38px;right:377.41999999999985px;">$2,726.02</div>
<div class="b" style="left:27px;top:817px;width:63px;height:18px;background:#d9d9d9;"></div>
<div class="b" style="left:90px;top:817px;width:247px;height:18px;background:#d9d9d9;"></div>
<div class="b" style="left:337px;top:817px;width:212px;height:18px;background:#d9d9d9;"></div>
<div class="b" style="left:549px;top:817px;width:131px;height:18px;background:#d9d9d9;"></div>
<div class="b" style="left:680px;top:817px;width:131px;height:18px;background:#d9d9d9;"></div>
<div class="b" style="left:811px;top:817px;width:131px;height:18px;background:#d9d9d9;"></div>
<div class="b" style="left:942px;top:817px;width:132px;height:18px;background:#d9d9d9;"></div>
<div class="t" style="top:821.18px;font-size:11.6px;color:#000;font-weight:bold;left:93.1px;"><span style="letter-spacing:0.66px">63300</span><span style="letter-spacing:-0.3px"> · </span><span style="letter-spacing:-0.15px">Insurance Expense</span></div>
<div class="t" style="top:821.18px;font-size:11.6px;color:#000;letter-spacing:0.38px;right:770.42px;">$12,133.14</div>
<div class="t" style="top:821.18px;font-size:11.6px;color:#000;letter-spacing:0.38px;right:639.42px;">$1,034.73</div>
<div class="t" style="top:821.18px;font-size:11.6px;color:#000;letter-spacing:0.38px;right:508.41999999999996px;">$1,448.61</div>
<div class="t" style="top:821.18px;font-size:11.6px;color:#000;letter-spacing:0.38px;right:377.41999999999985px;">$13,167.87</div>
<div class="b" style="left:549px;top:834px;width:131px;height:18px;background:#d9d9d9;"></div>
<div class="b" style="left:811px;top:834px;width:131px;height:18px;background:#d9d9d9;"></div>
<div class="b" style="left:90px;top:835px;width:1px;height:16px;background:#e1e1e1;"></div>
<div class="b" style="left:337px;top:835px;width:1px;height:16px;background:#e1e1e1;"></div>
<div class="b" style="left:1073px;top:835px;width:1px;height:16px;background:#e1e1e1;"></div>
<div class="t" style="top:838.18px;font-size:11.6px;color:#000;font-weight:bold;left:93.1px;"><span style="letter-spacing:0.66px">63400</span><span style="letter-spacing:-0.3px"> · </span><span style="letter-spacing:-0.15px">Interest Expense</span></div>
<div class="t" style="top:838.18px;font-size:11.6px;color:#000;letter-spacing:0.38px;right:770.42px;">$1,987.07</div>
<div class="t" style="top:838.18px;font-size:11.6px;color:#000;letter-spacing:0.38px;right:639.42px;">$200.14</div>
<div class="t" style="top:838.18px;font-size:11.6px;color:#000;letter-spacing:0.38px;right:508.41999999999996px;">$223.36</div>
<div class="t" style="top:838.18px;font-size:11.6px;color:#000;letter-spacing:0.38px;right:377.41999999999985px;">$2,187.21</div>
<div class="b" style="left:27px;top:851px;width:63px;height:18px;background:#d9d9d9;"></div>
<div class="b" style="left:90px;top:851px;width:247px;height:18px;background:#d9d9d9;"></div>
<div class="b" style="left:337px;top:851px;width:212px;height:18px;background:#d9d9d9;"></div>
<div class="b" style="left:549px;top:851px;width:131px;height:18px;background:#d9d9d9;"></div>
<div class="b" style="left:680px;top:851px;width:131px;height:18px;background:#d9d9d9;"></div>
<div class="b" style="left:811px;top:851px;width:131px;height:18px;background:#d9d9d9;"></div>
<div class="b" style="left:942px;top:851px;width:132px;height:18px;background:#d9d9d9;"></div>
<div class="t" style="top:855.18px;font-size:11.6px;color:#000;font-weight:bold;left:93.1px;"><span style="letter-spacing:0.66px">64300</span><span style="letter-spacing:-0.3px"> · </span><span style="letter-spacing:-0.15px">Meals and Entertainment</span></div>
<div class="t" style="top:855.18px;font-size:11.6px;color:#000;letter-spacing:0.38px;right:770.42px;">$23,367.71</div>
<div class="t" style="top:855.18px;font-size:11.6px;color:#000;letter-spacing:0.38px;right:639.42px;">$984.69</div>
<div class="t" style="top:855.18px;font-size:11.6px;color:#000;letter-spacing:0.38px;right:508.41999999999996px;">$1,355.19</div>
<div class="t" style="top:855.18px;font-size:11.6px;color:#000;letter-spacing:0.38px;right:377.41999999999985px;">$24,352.40</div>
<div class="b" style="left:549px;top:868px;width:131px;height:18px;background:#d9d9d9;"></div>
<div class="b" style="left:811px;top:868px;width:131px;height:18px;background:#d9d9d9;"></div>
<div class="b" style="left:90px;top:869px;width:1px;height:16px;background:#e1e1e1;"></div>
<div class="b" style="left:337px;top:869px;width:1px;height:16px;background:#e1e1e1;"></div>
<div class="b" style="left:1073px;top:869px;width:1px;height:16px;background:#e1e1e1;"></div>
<div class="t" style="top:872.18px;font-size:11.6px;color:#000;font-weight:bold;left:93.1px;"><span style="letter-spacing:0.66px">64900</span><span style="letter-spacing:-0.3px"> · </span><span style="letter-spacing:-0.15px">Office Supplies</span></div>
<div class="t" style="top:872.18px;font-size:11.6px;color:#000;letter-spacing:0.38px;right:770.42px;">$13,156.84</div>
<div class="t" style="top:872.18px;font-size:11.6px;color:#000;letter-spacing:0.38px;right:639.42px;">$1,347.05</div>
<div class="t" style="top:872.18px;font-size:11.6px;color:#000;letter-spacing:0.38px;right:508.41999999999996px;">$1,471.95</div>
<div class="t" style="top:872.18px;font-size:11.6px;color:#000;letter-spacing:0.38px;right:377.41999999999985px;">$14,503.89</div>
<div class="b" style="left:27px;top:885px;width:63px;height:18px;background:#d9d9d9;"></div>
<div class="b" style="left:90px;top:885px;width:247px;height:18px;background:#d9d9d9;"></div>
<div class="b" style="left:337px;top:885px;width:212px;height:18px;background:#d9d9d9;"></div>
<div class="b" style="left:549px;top:885px;width:131px;height:18px;background:#d9d9d9;"></div>
<div class="b" style="left:680px;top:885px;width:131px;height:18px;background:#d9d9d9;"></div>
<div class="b" style="left:811px;top:885px;width:131px;height:18px;background:#d9d9d9;"></div>
<div class="b" style="left:942px;top:885px;width:132px;height:18px;background:#d9d9d9;"></div>
<div class="t" style="top:889.18px;font-size:11.6px;color:#000;font-weight:bold;left:93.1px;"><span style="letter-spacing:0.66px">66000</span><span style="letter-spacing:-0.3px"> · </span><span style="letter-spacing:-0.15px">Payroll Expenses</span></div>
<div class="t" style="top:889.18px;font-size:11.6px;color:#000;letter-spacing:0.38px;right:770.42px;">$162,547.88</div>
<div class="t" style="top:889.18px;font-size:11.6px;color:#000;letter-spacing:0.38px;right:639.42px;">$25,576.14</div>
<div class="t" style="top:889.18px;font-size:11.6px;color:#000;letter-spacing:0.38px;right:508.41999999999996px;">$22,353.91</div>
<div class="t" style="top:889.18px;font-size:11.6px;color:#000;letter-spacing:0.38px;right:377.41999999999985px;">$188,124.02</div>
<div class="b" style="left:549px;top:902px;width:131px;height:18px;background:#d9d9d9;"></div>
<div class="b" style="left:811px;top:902px;width:131px;height:18px;background:#d9d9d9;"></div>
<div class="b" style="left:90px;top:903px;width:1px;height:16px;background:#e1e1e1;"></div>
<div class="b" style="left:337px;top:903px;width:1px;height:16px;background:#e1e1e1;"></div>
<div class="b" style="left:1073px;top:903px;width:1px;height:16px;background:#e1e1e1;"></div>
<div class="t" style="top:906.18px;font-size:11.6px;color:#000;font-weight:bold;left:93.1px;"><span style="letter-spacing:0.66px">66500</span><span style="letter-spacing:-0.3px"> · </span><span style="letter-spacing:-0.15px">Postage and Delivery</span></div>
<div class="t" style="top:906.18px;font-size:11.6px;color:#000;letter-spacing:0.38px;right:770.42px;">$0.00</div>
<div class="t" style="top:906.18px;font-size:11.6px;color:#000;letter-spacing:0.38px;right:639.42px;">$0.00</div>
<div class="t" style="top:906.18px;font-size:11.6px;color:#000;letter-spacing:0.38px;right:508.41999999999996px;">$0.00</div>
<div class="t" style="top:906.18px;font-size:11.6px;color:#000;letter-spacing:0.38px;right:377.41999999999985px;">$0.00</div>
<div class="b" style="left:27px;top:919px;width:63px;height:18px;background:#d9d9d9;"></div>
<div class="b" style="left:90px;top:919px;width:247px;height:18px;background:#d9d9d9;"></div>
<div class="b" style="left:337px;top:919px;width:212px;height:18px;background:#d9d9d9;"></div>
<div class="b" style="left:549px;top:919px;width:131px;height:18px;background:#d9d9d9;"></div>
<div class="b" style="left:680px;top:919px;width:131px;height:18px;background:#d9d9d9;"></div>
<div class="b" style="left:811px;top:919px;width:131px;height:18px;background:#d9d9d9;"></div>
<div class="b" style="left:942px;top:919px;width:132px;height:18px;background:#d9d9d9;"></div>
<div class="t" style="top:923.18px;font-size:11.6px;color:#000;font-weight:bold;left:93.1px;"><span style="letter-spacing:0.66px">66700</span><span style="letter-spacing:-0.3px"> · </span><span style="letter-spacing:-0.15px">Professional Fees</span></div>
<div class="t" style="top:923.18px;font-size:11.6px;color:#000;letter-spacing:0.38px;right:770.42px;">$6,013.33</div>
<div class="t" style="top:923.18px;font-size:11.6px;color:#000;letter-spacing:0.38px;right:639.42px;">$2,050.00</div>
<div class="t" style="top:923.18px;font-size:11.6px;color:#000;letter-spacing:0.38px;right:508.41999999999996px;">$0.00</div>
<div class="t" style="top:923.18px;font-size:11.6px;color:#000;letter-spacing:0.38px;right:377.41999999999985px;">$8,063.33</div>
<div class="b" style="left:549px;top:936px;width:131px;height:18px;background:#d9d9d9;"></div>
<div class="b" style="left:811px;top:936px;width:131px;height:18px;background:#d9d9d9;"></div>
<div class="b" style="left:90px;top:937px;width:1px;height:16px;background:#e1e1e1;"></div>
<div class="b" style="left:337px;top:937px;width:1px;height:16px;background:#e1e1e1;"></div>
<div class="b" style="left:1073px;top:937px;width:1px;height:16px;background:#e1e1e1;"></div>
<div class="t" style="top:940.18px;font-size:11.6px;color:#000;font-weight:bold;left:93.1px;"><span style="letter-spacing:0.66px">67100</span><span style="letter-spacing:-0.3px"> · </span><span style="letter-spacing:-0.15px">Rent Expense</span></div>
<div class="t" style="top:940.18px;font-size:11.6px;color:#000;letter-spacing:0.38px;right:770.42px;">$81,296.80</div>
<div class="t" style="top:940.18px;font-size:11.6px;color:#000;letter-spacing:0.38px;right:639.42px;">$8,988.00</div>
<div class="t" style="top:940.18px;font-size:11.6px;color:#000;letter-spacing:0.38px;right:508.41999999999996px;">$9,737.00</div>
<div class="t" style="top:940.18px;font-size:11.6px;color:#000;letter-spacing:0.38px;right:377.41999999999985px;">$90,284.80</div>
<div class="b" style="left:27px;top:953px;width:63px;height:18px;background:#d9d9d9;"></div>
<div class="b" style="left:90px;top:953px;width:247px;height:18px;background:#d9d9d9;"></div>
<div class="b" style="left:337px;top:953px;width:212px;height:18px;background:#d9d9d9;"></div>
<div class="b" style="left:549px;top:953px;width:131px;height:18px;background:#d9d9d9;"></div>
<div class="b" style="left:680px;top:953px;width:131px;height:18px;background:#d9d9d9;"></div>
<div class="b" style="left:811px;top:953px;width:131px;height:18px;background:#d9d9d9;"></div>
<div class="b" style="left:942px;top:953px;width:132px;height:18px;background:#d9d9d9;"></div>
<div class="t" style="top:957.18px;font-size:11.6px;color:#000;font-weight:bold;left:93.1px;"><span style="letter-spacing:0.66px">67200</span><span style="letter-spacing:-0.3px"> · </span><span style="letter-spacing:-0.15px">Repairs and Maintenance</span></div>
<div class="t" style="top:957.18px;font-size:11.6px;color:#000;letter-spacing:0.38px;right:770.42px;">$7,729.98</div>
<div class="t" style="top:957.18px;font-size:11.6px;color:#000;letter-spacing:0.38px;right:639.42px;">$1,291.76</div>
<div class="t" style="top:957.18px;font-size:11.6px;color:#000;letter-spacing:0.38px;right:508.41999999999996px;">$1,750.76</div>
<div class="t" style="top:957.18px;font-size:11.6px;color:#000;letter-spacing:0.38px;right:377.41999999999985px;">$9,021.74</div>
<div class="b" style="left:549px;top:970px;width:131px;height:18px;background:#d9d9d9;"></div>
<div class="b" style="left:811px;top:970px;width:131px;height:18px;background:#d9d9d9;"></div>
<div class="b" style="left:90px;top:971px;width:1px;height:16px;background:#e1e1e1;"></div>
<div class="b" style="left:337px;top:971px;width:1px;height:16px;background:#e1e1e1;"></div>
<div class="b" style="left:1073px;top:971px;width:1px;height:16px;background:#e1e1e1;"></div>
<div class="t" style="top:974.18px;font-size:11.6px;color:#000;font-weight:bold;left:93.1px;"><span style="letter-spacing:0.66px">68100</span><span style="letter-spacing:-0.3px"> · </span><span style="letter-spacing:-0.15px">Telephone Expense</span></div>
<div class="t" style="top:974.18px;font-size:11.6px;color:#000;letter-spacing:0.38px;right:770.42px;">$3,092.34</div>
<div class="t" style="top:974.18px;font-size:11.6px;color:#000;letter-spacing:0.38px;right:639.42px;">$299.36</div>
<div class="t" style="top:974.18px;font-size:11.6px;color:#000;letter-spacing:0.38px;right:508.41999999999996px;">$400.69</div>
<div class="t" style="top:974.18px;font-size:11.6px;color:#000;letter-spacing:0.38px;right:377.41999999999985px;">$3,391.70</div>
<div class="b" style="left:27px;top:987px;width:63px;height:18px;background:#d9d9d9;"></div>
<div class="b" style="left:90px;top:987px;width:247px;height:18px;background:#d9d9d9;"></div>
<div class="b" style="left:337px;top:987px;width:212px;height:18px;background:#d9d9d9;"></div>
<div class="b" style="left:549px;top:987px;width:131px;height:18px;background:#d9d9d9;"></div>
<div class="b" style="left:680px;top:987px;width:131px;height:18px;background:#d9d9d9;"></div>
<div class="b" style="left:811px;top:987px;width:131px;height:18px;background:#d9d9d9;"></div>
<div class="b" style="left:942px;top:987px;width:132px;height:18px;background:#d9d9d9;"></div>
<div class="t" style="top:991.18px;font-size:11.6px;color:#000;font-weight:bold;left:93.1px;"><span style="letter-spacing:0.66px">68400</span><span style="letter-spacing:-0.3px"> · </span><span style="letter-spacing:-0.15px">Travel Expense</span></div>
<div class="t" style="top:991.18px;font-size:11.6px;color:#000;letter-spacing:0.38px;right:770.42px;">$421.88</div>
<div class="t" style="top:991.18px;font-size:11.6px;color:#000;letter-spacing:0.38px;right:639.42px;">$0.00</div>
<div class="t" style="top:991.18px;font-size:11.6px;color:#000;letter-spacing:0.38px;right:508.41999999999996px;">$0.00</div>
<div class="t" style="top:991.18px;font-size:11.6px;color:#000;letter-spacing:0.38px;right:377.41999999999985px;">$421.88</div>
<div class="b" style="left:549px;top:1004px;width:131px;height:18px;background:#d9d9d9;"></div>
<div class="b" style="left:811px;top:1004px;width:131px;height:18px;background:#d9d9d9;"></div>
<div class="b" style="left:90px;top:1005px;width:1px;height:16px;background:#e1e1e1;"></div>
<div class="b" style="left:337px;top:1005px;width:1px;height:16px;background:#e1e1e1;"></div>
<div class="b" style="left:1073px;top:1005px;width:1px;height:16px;background:#e1e1e1;"></div>
<div class="t" style="top:1008.18px;font-size:11.6px;color:#000;font-weight:bold;left:93.1px;"><span style="letter-spacing:0.66px">68600</span><span style="letter-spacing:-0.3px"> · </span><span style="letter-spacing:-0.15px">Utilities</span></div>
<div class="t" style="top:1008.18px;font-size:11.6px;color:#000;letter-spacing:0.38px;right:770.42px;">$14,409.50</div>
<div class="t" style="top:1008.18px;font-size:11.6px;color:#000;letter-spacing:0.38px;right:639.42px;">$1,137.66</div>
<div class="t" style="top:1008.18px;font-size:11.6px;color:#000;letter-spacing:0.38px;right:508.41999999999996px;">$1,449.27</div>
<div class="t" style="top:1008.18px;font-size:11.6px;color:#000;letter-spacing:0.38px;right:377.41999999999985px;">$15,547.16</div>
<div class="b" style="left:27px;top:1021px;width:63px;height:18px;background:#d9d9d9;"></div>
<div class="b" style="left:90px;top:1021px;width:247px;height:18px;background:#d9d9d9;"></div>
<div class="b" style="left:337px;top:1021px;width:212px;height:18px;background:#d9d9d9;"></div>
<div class="b" style="left:549px;top:1021px;width:131px;height:18px;background:#d9d9d9;"></div>
<div class="b" style="left:680px;top:1021px;width:131px;height:18px;background:#d9d9d9;"></div>
<div class="b" style="left:811px;top:1021px;width:131px;height:18px;background:#d9d9d9;"></div>
<div class="b" style="left:942px;top:1021px;width:132px;height:18px;background:#d9d9d9;"></div>
<div class="t" style="top:1025.18px;font-size:11.6px;color:#000;font-weight:bold;letter-spacing:0px;left:29.2px;">14</div>
<div class="t" style="top:1025.18px;font-size:11.6px;color:#000;font-weight:bold;left:93.1px;"><span style="letter-spacing:0.66px">70000</span><span style="letter-spacing:-0.3px"> · </span><span style="letter-spacing:-0.15px">Interest Income</span></div>
<div class="t" style="top:1025.18px;font-size:11.6px;color:#000;letter-spacing:0.38px;right:770.42px;">($95.40)</div>
<div class="t" style="top:1025.18px;font-size:11.6px;color:#000;letter-spacing:0.38px;right:639.42px;">($10.33)</div>
<div class="t" style="top:1025.18px;font-size:11.6px;color:#000;letter-spacing:0.38px;right:508.41999999999996px;">($8.06)</div>
<div class="t" style="top:1025.18px;font-size:11.6px;color:#000;letter-spacing:0.38px;right:377.41999999999985px;">($105.73)</div>
<div class="b" style="left:549px;top:1038px;width:131px;height:18px;background:#d9d9d9;"></div>
<div class="b" style="left:811px;top:1038px;width:131px;height:18px;background:#d9d9d9;"></div>
<div class="b" style="left:90px;top:1039px;width:1px;height:16px;background:#e1e1e1;"></div>
<div class="b" style="left:337px;top:1039px;width:1px;height:16px;background:#e1e1e1;"></div>
<div class="b" style="left:1073px;top:1039px;width:1px;height:16px;background:#e1e1e1;"></div>
<div class="t" style="top:1042.18px;font-size:11.6px;color:#000;font-weight:bold;letter-spacing:0px;left:29.2px;">15</div>
<div class="t" style="top:1042.18px;font-size:11.6px;color:#000;font-weight:bold;left:93.1px;"><span style="letter-spacing:0.66px">80000</span><span style="letter-spacing:-0.3px"> · </span><span style="letter-spacing:-0.15px">Ask My Accountant</span></div>
<div class="t" style="top:1042.18px;font-size:11.6px;color:#000;letter-spacing:0.38px;right:770.42px;">$396.84</div>
<div class="t" style="top:1042.18px;font-size:11.6px;color:#000;letter-spacing:0.38px;right:639.42px;">$0.00</div>
<div class="t" style="top:1042.18px;font-size:11.6px;color:#000;letter-spacing:0.38px;right:508.41999999999996px;">($184.63)</div>
<div class="t" style="top:1042.18px;font-size:11.6px;color:#000;letter-spacing:0.38px;right:377.41999999999985px;">$396.84</div>
<div class="b" style="left:549px;top:308px;width:1px;height:747px;background:#c4c4c4;"></div>
<div class="b" style="left:680px;top:308px;width:1px;height:747px;background:#c4c4c4;"></div>
<div class="b" style="left:811px;top:308px;width:1px;height:747px;background:#c4c4c4;"></div>
<div class="b" style="left:942px;top:308px;width:1px;height:747px;background:#c4c4c4;"></div>
<div class="b" style="left:27px;top:341px;width:1047px;height:1px;background:#d3d3d3;"></div>
<div class="b" style="left:27px;top:375px;width:1047px;height:1px;background:#d3d3d3;"></div>
<div class="b" style="left:27px;top:409px;width:1047px;height:1px;background:#d3d3d3;"></div>
<div class="b" style="left:27px;top:443px;width:1047px;height:1px;background:#d3d3d3;"></div>
<div class="b" style="left:27px;top:477px;width:1047px;height:1px;background:#d3d3d3;"></div>
<div class="b" style="left:27px;top:511px;width:1047px;height:1px;background:#d3d3d3;"></div>
<div class="b" style="left:27px;top:545px;width:1047px;height:1px;background:#d3d3d3;"></div>
<div class="b" style="left:27px;top:579px;width:1047px;height:1px;background:#d3d3d3;"></div>
<div class="b" style="left:27px;top:613px;width:1047px;height:1px;background:#d3d3d3;"></div>
<div class="b" style="left:27px;top:647px;width:1047px;height:1px;background:#d3d3d3;"></div>
<div class="b" style="left:27px;top:681px;width:1047px;height:1px;background:#d3d3d3;"></div>
<div class="b" style="left:27px;top:715px;width:1047px;height:1px;background:#d3d3d3;"></div>
<div class="b" style="left:27px;top:749px;width:1047px;height:1px;background:#d3d3d3;"></div>
<div class="b" style="left:27px;top:783px;width:1047px;height:1px;background:#d3d3d3;"></div>
<div class="b" style="left:27px;top:817px;width:1047px;height:1px;background:#d3d3d3;"></div>
<div class="b" style="left:27px;top:851px;width:1047px;height:1px;background:#d3d3d3;"></div>
<div class="b" style="left:27px;top:885px;width:1047px;height:1px;background:#d3d3d3;"></div>
<div class="b" style="left:27px;top:919px;width:1047px;height:1px;background:#d3d3d3;"></div>
<div class="b" style="left:27px;top:953px;width:1047px;height:1px;background:#d3d3d3;"></div>
<div class="b" style="left:27px;top:987px;width:1047px;height:1px;background:#d3d3d3;"></div>
<div class="b" style="left:27px;top:1021px;width:1047px;height:1px;background:#d3d3d3;"></div>
<div class="b" style="left:27px;top:358px;width:63px;height:1px;background:#8ea9db;"></div>
<div class="b" style="left:27px;top:375px;width:63px;height:1px;background:#8ea9db;"></div>
<div class="b" style="left:27px;top:409px;width:63px;height:1px;background:#8ea9db;"></div>
<div class="b" style="left:27px;top:443px;width:63px;height:1px;background:#8ea9db;"></div>
<div class="b" style="left:27px;top:460px;width:63px;height:1px;background:#8ea9db;"></div>
<div class="b" style="left:27px;top:477px;width:63px;height:1px;background:#8ea9db;"></div>
<div class="b" style="left:27px;top:528px;width:63px;height:1px;background:#8ea9db;"></div>
<div class="b" style="left:27px;top:545px;width:63px;height:1px;background:#8ea9db;"></div>
<div class="b" style="left:27px;top:562px;width:63px;height:1px;background:#8ea9db;"></div>
<div class="b" style="left:27px;top:613px;width:63px;height:1px;background:#8ea9db;"></div>
<div class="b" style="left:27px;top:647px;width:63px;height:1px;background:#8ea9db;"></div>
<div class="b" style="left:27px;top:715px;width:63px;height:1px;background:#8ea9db;"></div>
<div class="b" style="left:27px;top:1021px;width:63px;height:1px;background:#8ea9db;"></div>
<div class="b" style="left:27px;top:1038px;width:63px;height:1px;background:#8ea9db;"></div>
<div class="b" style="left:1px;top:1055px;width:1075px;height:1px;background:#9c9c9c;"></div>
<div class="b" style="left:1075px;top:239px;width:1px;height:817px;background:#9c9c9c;"></div>
<div class="b" style="left:25px;top:272px;width:67px;height:37px;border:2px solid #107c41;box-sizing:border-box;"></div>
<div class="b" style="left:88px;top:305px;width:5px;height:5px;background:#107c41;"></div>
<div class="b" style="left:1078px;top:220px;width:17px;height:835px;background:#f0f0f0;"></div>
<div class="b" style="left:1078px;top:220px;width:17px;height:835px;background:#f7f7f7;border-radius:8px;"></div>
<svg class="b" style="left:1082px;top:225px" width="9" height="7" viewBox="0 0 9 7"><path d="M4.5 0.5 L8.5 6 H0.5Z" fill="#6d6d6d"/></svg>
<div class="b" style="left:1082px;top:237px;width:9px;height:660px;background:#6d6d6d;border-radius:4.5px;"></div>
<svg class="b" style="left:1082px;top:1046px" width="9" height="7" viewBox="0 0 9 7"><path d="M0.5 0.5 H8.5 L4.5 6Z" fill="#6d6d6d"/></svg>
<div class="b" style="left:1px;top:1056px;width:1096px;height:27px;background:#f7f7f7;"></div>
<div class="b" style="left:1px;top:1056px;width:17px;height:27px;background:#efefef;"></div>
<svg class="b" style="left:27px;top:1065px" width="5" height="7" viewBox="0 0 5 7"><path d="M4.5 0 V7 L0 3.5Z" fill="#b0b0b0"/></svg>
<svg class="b" style="left:57px;top:1065px" width="5" height="7" viewBox="0 0 5 7"><path d="M0.5 0 V7 L5 3.5Z" fill="#b0b0b0"/></svg>
<div class="b" style="left:101px;top:1059px;width:1px;height:20px;background:#a8a8a8;"></div>
<div class="b" style="left:104px;top:1058px;width:143px;height:22px;background:#00b050;"></div>
<div class="t" style="top:1062.81px;font-size:12.75px;color:#1b1b1b;left:-125px;width:600px;text-align:center;">General Instructions</div>
<div class="b" style="left:249px;top:1059px;width:1px;height:20px;background:#a8a8a8;"></div>
<div class="t" style="top:1062.68px;font-size:12.9px;color:#333;left:29px;width:600px;text-align:center;">No Hierarchy Example</div>
<div class="b" style="left:410px;top:1055px;width:139px;height:25px;background:#fff;border-left:1px solid #c8c8c8;border-right:1px solid #c8c8c8;box-sizing:border-box;"></div>
<div class="b" style="left:410px;top:1078px;width:139px;height:2px;background:#107c41;"></div>
<div class="t" style="top:1062.63px;font-size:12.6px;color:#107c41;font-weight:bold;letter-spacing:-0.1px;left:180px;width:600px;text-align:center;">Hierarchy Example</div>
<svg class="b" style="left:581px;top:1060px" width="18" height="18" viewBox="0 0 18 18"><circle cx="9" cy="9" r="7.5" fill="none" stroke="#555" stroke-width="1.1"/><path d="M9 5 V13 M5 9 H13" stroke="#555" stroke-width="1.3"/></svg>
<div class="b" style="left:605px;top:1056px;width:492px;height:27px;background:#f0f0f0;"></div>
<div class="b" style="left:658px;top:1062px;width:2px;height:2px;background:#333;"></div>
<div class="b" style="left:658px;top:1067px;width:2px;height:2px;background:#333;"></div>
<div class="b" style="left:658px;top:1072px;width:2px;height:2px;background:#333;"></div>
<div class="b" style="left:673px;top:1058px;width:404px;height:22px;background:#f7f7f7;border-radius:11px;"></div>
<svg class="b" style="left:678px;top:1064px" width="7" height="10" viewBox="0 0 7 10"><path d="M6.5 0 V10 L0.5 5Z" fill="#6d6d6d"/></svg>
<div class="b" style="left:690px;top:1064px;width:349px;height:9px;background:#6d6d6d;border-radius:4.5px;"></div>
<svg class="b" style="left:1066px;top:1064px" width="7" height="10" viewBox="0 0 7 10"><path d="M0.5 0 V10 L6.5 5Z" fill="#6d6d6d"/></svg>
<div class="b" style="left:1px;top:1083px;width:1446px;height:22px;background:#f3f3f3;"></div>
<div class="b" style="left:1px;top:1083px;width:1446px;height:1px;background:#fcfcfc;"></div>
<div class="t" style="top:1089.36px;font-size:10.8px;color:#262626;left:8.3px;">Ready</div>
<svg class="b" style="left:59px;top:1088px" width="15" height="13" viewBox="0 0 15 13"><path d="M5 11.5 H0.8 V0.8 H13.2 V4.5" fill="none" stroke="#222" stroke-width="1.2"/><path d="M0.8 2.6 H13.2" stroke="#222" stroke-width="1.2"/><path d="M2.3 4.6 H4.3 M2.3 6.6 H3.8 M2.3 8.6 H3.8" stroke="#222" stroke-width="1"/><circle cx="9.3" cy="8.4" r="3.5" fill="none" stroke="#222" stroke-width="1.1"/><rect x="8.3" y="7.4" width="2" height="2" fill="#222"/></svg>
<svg class="b" style="left:90px;top:1087px" width="15" height="15" viewBox="0 0 15 15"><circle cx="7.2" cy="1.9" r="1.4" fill="none" stroke="#222" stroke-width="1"/><path d="M2.2 2.8 C0.4 4.2 2.5 5.3 5 5.6 C6.5 5.8 8 5.8 9.5 5.6 C12 5.3 14 4.2 12.2 2.8" fill="none" stroke="#222" stroke-width="1"/><path d="M5.2 5.8 L4.2 12.2 C4 13.8 5.6 13.8 6 12.4 L6.4 10" fill="none" stroke="#222" stroke-width="1"/><path d="M8.2 8.8 L14 14.2 M14 8.8 L8.2 14.2" stroke="#222" stroke-width="1"/></svg>
<div class="t" style="top:1088.93px;font-size:11.3px;color:#262626;left:109px;">Accessibility: Investigate</div>
<div class="b" style="left:1136px;top:1083px;width:40px;height:21px;background:#dedede;"></div>
<svg class="b" style="left:1148px;top:1087px" width="14" height="13" viewBox="0 0 14 13"><path d="M0.5 0.5 H13.5 V12.5 H0.5Z M0.5 4.5 H13.5 M0.5 8.5 H13.5 M4.8 0.5 V12.5 M9.2 0.5 V12.5" fill="none" stroke="#333"/></svg>
<svg class="b" style="left:1189px;top:1087px" width="15" height="13" viewBox="0 0 15 13"><rect x="0.5" y="0.5" width="14" height="12" fill="none" stroke="#333"/><rect x="3.5" y="2.5" width="8" height="8" fill="none" stroke="#333"/><path d="M5 4.5 H10 M5 6.5 H10 M5 8.5 H10" stroke="#333" stroke-width="0.8"/></svg>
<svg class="b" style="left:1229px;top:1087px" width="15" height="13" viewBox="0 0 15 13"><path d="M0.5 12.5 V0.5 H14.5 V12.5 M5.5 0.5 V6.5 H9.5 V0.5" fill="none" stroke="#333"/></svg>
<div class="b" style="left:1262px;top:1094px;width:8px;height:1px;background:#333;"></div>
<div class="b" style="left:1275px;top:1094px;width:100px;height:1px;background:#666;"></div>
<div class="b" style="left:1323px;top:1089px;width:5px;height:11px;background:#5b5b5b;"></div>
<div class="b" style="left:1380px;top:1094px;width:8px;height:1px;background:#333;"></div>
<div class="b" style="left:1383.5px;top:1090px;width:1px;height:9px;background:#333;"></div>
<div class="t" style="top:1089.50px;font-size:10.4px;color:#262626;left:1401.5px;">100%</div>
<div class="b" style="left:1097px;top:220px;width:350px;height:863px;background:#f0f0f0;"></div>
<div class="b" style="left:1097px;top:222px;width:1px;height:858px;background:#c9c9c9;"></div>
<div class="t" style="top:236.79px;font-size:20.1px;color:#454545;left:1111.8px;">PivotTable Fields</div>
<svg class="b" style="left:1375px;top:240px" width="13" height="8" viewBox="0 0 13 8"><path d="M0.5 0.5 L6.5 6.5 L12.5 0.5" fill="none" stroke="#333" stroke-width="1.1"/></svg>
<svg class="b" style="left:1418px;top:238px" width="10" height="10" viewBox="0 0 10 10"><path d="M0.5 0.5 L9.5 9.5 M9.5 0.5 L0.5 9.5" stroke="#333" stroke-width="1.1"/></svg>
<div class="t" style="top:270.84px;font-size:12px;color:#262626;left:1110.5px;">Active</div>
<div class="t" style="top:270.84px;font-size:12px;color:#262626;left:1169px;">All</div>
<div class="b" style="left:1110px;top:292px;width:35px;height:2px;background:#107c41;"></div>
<div class="t" style="top:307.77px;font-size:11.85px;color:#262626;left:1111.8px;">Choose fields to add to report:</div>
<div class="b" style="left:1387px;top:298px;width:46px;height:29px;background:#fff;border:1px solid #8a8a8a;box-sizing:border-box;"></div>
<svg class="b" style="left:1397px;top:304px" width="16" height="16" viewBox="0 0 16 16"><path d="M12.64 6.13 L14.82 6.43 L14.82 9.57 L12.64 9.87 L11.94 11.08 L12.77 13.12 L10.05 14.69 L8.70 12.95 L7.30 12.95 L5.95 14.69 L3.23 13.12 L4.06 11.08 L3.36 9.87 L1.18 9.57 L1.18 6.43 L3.36 6.13 L4.06 4.92 L3.23 2.88 L5.95 1.31 L7.30 3.05 L8.70 3.05 L10.05 1.31 L12.77 2.88 L11.94 4.92Z" fill="none" stroke="#333" stroke-width="1" stroke-linejoin="round"/><circle cx="8" cy="8" r="2.6" fill="none" stroke="#333" stroke-width="1"/></svg>
<svg class="b" style="left:1420px;top:310px" width="7" height="4" viewBox="0 0 7 4"><path d="M0 0 H7 L3.5 4Z" fill="#222"/></svg>
<div class="b" style="left:1110px;top:340px;width:323px;height:24px;background:#fff;border:1px solid #9a9a9a;box-sizing:border-box;"></div>
<div class="t" style="top:346.35px;font-size:11.4px;color:#6a6a6a;left:1117.4px;">Search</div>
<svg class="b" style="left:1412px;top:343px" width="18" height="18" viewBox="0 0 18 18"><circle cx="11" cy="7" r="5" fill="none" stroke="#333" stroke-width="1.1"/><path d="M7.4 10.6 L1.5 16.5" stroke="#333" stroke-width="1.2"/></svg>
<div class="b" style="left:1110px;top:380px;width:323px;height:276px;background:#fff;border:1px solid #9a9a9a;box-sizing:border-box;"></div>
<svg class="b" style="left:1118px;top:387px" width="8" height="7" viewBox="0 0 8 7"><path d="M7.5 0 V6.5 H0" fill="none" stroke="#333"/></svg>
<svg class="b" style="left:1132px;top:383px" width="12" height="14" viewBox="0 0 12 14"><path d="M11.5 2.5 V0.5 H0.8 L6.3 7 L0.8 13.5 H11.5 V11.5" fill="none" stroke="#333" stroke-width="1"/></svg>
<div class="t" style="top:384.10px;font-size:11.7px;color:#1b1b1b;font-weight:bold;letter-spacing:-0.25px;left:1149px;">TRIAL BALANCE - ACTIVITY</div>
<svg class="b" style="left:1149px;top:401px" width="13" height="13" viewBox="0 0 13 13"><rect x="0" y="0" width="13" height="13" fill="#107c41"/><path d="M3 6.5 L5.5 9 L10.3 4.2" fill="none" stroke="#fff" stroke-width="1.3"/></svg>
<div class="t" style="top:398.11px;font-size:17px;color:#333;left:1167.5px;font-family:'Liberation Serif',serif;font-style:italic;letter-spacing:-0.3px;">fx</div>
<div class="t" style="top:401.81px;font-size:11.8px;color:#1b1b1b;font-weight:bold;letter-spacing:-0.1px;left:1186.2px;">.Current Activity Amount</div>
<svg class="b" style="left:1149px;top:425px" width="13" height="13" viewBox="0 0 13 13"><rect x="0" y="0" width="13" height="13" fill="#107c41"/><path d="M3 6.5 L5.5 9 L10.3 4.2" fill="none" stroke="#fff" stroke-width="1.3"/></svg>
<div class="t" style="top:422.11px;font-size:17px;color:#333;left:1167.5px;font-family:'Liberation Serif',serif;font-style:italic;letter-spacing:-0.3px;">fx</div>
<div class="t" style="top:425.81px;font-size:11.8px;color:#1b1b1b;font-weight:bold;letter-spacing:-0.1px;left:1186.2px;">.Current Activity Budget</div>
<div class="b" style="left:1149px;top:449px;width:13px;height:13px;border:1px solid #6e6e6e;box-sizing:border-box;background:#fff;"></div>
<div class="t" style="top:446.11px;font-size:17px;color:#333;left:1167.5px;font-family:'Liberation Serif',serif;font-style:italic;letter-spacing:-0.3px;">fx</div>
<div class="t" style="top:449.56px;font-size:12.1px;color:#262626;left:1186.2px;">.Current Beginning Debit Amount</div>
<div class="b" style="left:1149px;top:473px;width:13px;height:13px;border:1px solid #6e6e6e;box-sizing:border-box;background:#fff;"></div>
<div class="t" style="top:470.11px;font-size:17px;color:#333;left:1167.5px;font-family:'Liberation Serif',serif;font-style:italic;letter-spacing:-0.3px;">fx</div>
<div class="t" style="top:473.56px;font-size:12.1px;color:#262626;left:1186.2px;">.Current Beginning Debit Budget</div>
<div class="b" style="left:1149px;top:497px;width:13px;height:13px;border:1px solid #6e6e6e;box-sizing:border-box;background:#fff;"></div>
<div class="t" style="top:494.11px;font-size:17px;color:#333;left:1167.5px;font-family:'Liberation Serif',serif;font-style:italic;letter-spacing:-0.3px;">fx</div>
<div class="t" style="top:497.56px;font-size:12.1px;color:#262626;left:1186.2px;">.Current Beginning Credit Amount</div>
<div class="b" style="left:1149px;top:521px;width:13px;height:13px;border:1px solid #6e6e6e;box-sizing:border-box;background:#fff;"></div>
<div class="t" style="top:518.11px;font-size:17px;color:#333;left:1167.5px;font-family:'Liberation Serif',serif;font-style:italic;letter-spacing:-0.3px;">fx</div>
<div class="t" style="top:521.56px;font-size:12.1px;color:#262626;left:1186.2px;">.Current Beginning Credit Budget</div>
<svg class="b" style="left:1149px;top:545px" width="13" height="13" viewBox="0 0 13 13"><rect x="0" y="0" width="13" height="13" fill="#107c41"/><path d="M3 6.5 L5.5 9 L10.3 4.2" fill="none" stroke="#fff" stroke-width="1.3"/></svg>
<div class="t" style="top:542.11px;font-size:17px;color:#333;left:1167.5px;font-family:'Liberation Serif',serif;font-style:italic;letter-spacing:-0.3px;">fx</div>
<div class="t" style="top:545.81px;font-size:11.8px;color:#1b1b1b;font-weight:bold;letter-spacing:-0.1px;left:1186.2px;">.Current Beginning TB Amount</div>
<div class="b" style="left:1149px;top:569px;width:13px;height:13px;border:1px solid #6e6e6e;box-sizing:border-box;background:#fff;"></div>
<div class="t" style="top:566.11px;font-size:17px;color:#333;left:1167.5px;font-family:'Liberation Serif',serif;font-style:italic;letter-spacing:-0.3px;">fx</div>
<div class="t" style="top:569.56px;font-size:12.1px;color:#262626;left:1186.2px;">.Current Beginning TB Budget</div>
<div class="b" style="left:1149px;top:593px;width:13px;height:13px;border:1px solid #6e6e6e;box-sizing:border-box;background:#fff;"></div>
<div class="t" style="top:590.11px;font-size:17px;color:#333;left:1167.5px;font-family:'Liberation Serif',serif;font-style:italic;letter-spacing:-0.3px;">fx</div>
<div class="t" style="top:593.56px;font-size:12.1px;color:#262626;left:1186.2px;">.Current Ending Debit Amount</div>
<div class="b" style="left:1149px;top:617px;width:13px;height:13px;border:1px solid #6e6e6e;box-sizing:border-box;background:#fff;"></div>
<div class="t" style="top:614.11px;font-size:17px;color:#333;left:1167.5px;font-family:'Liberation Serif',serif;font-style:italic;letter-spacing:-0.3px;">fx</div>
<div class="t" style="top:617.56px;font-size:12.1px;color:#262626;left:1186.2px;">.Current Ending Debit Budget</div>
<div class="b" style="left:1149px;top:641px;width:13px;height:13px;border:1px solid #6e6e6e;box-sizing:border-box;background:#fff;"></div>
<div class="t" style="top:638.11px;font-size:17px;color:#333;left:1167.5px;font-family:'Liberation Serif',serif;font-style:italic;letter-spacing:-0.3px;">fx</div>
<div class="t" style="top:641.56px;font-size:12.1px;color:#262626;left:1186.2px;">.Current Ending Credit Amount</div>
<div class="b" style="left:1110px;top:656px;width:323px;height:12px;background:#f0f0f0;"></div>
<div class="b" style="left:1110px;top:655px;width:323px;height:1px;background:#9a9a9a;"></div>
<div class="b" style="left:1415px;top:381px;width:17px;height:274px;background:#f7f7f7;"></div>
<svg class="b" style="left:1419px;top:386px" width="9" height="7" viewBox="0 0 9 7"><path d="M4.5 0.5 L8.5 6 H0.5Z" fill="#6d6d6d"/></svg>
<div class="b" style="left:1419px;top:398px;width:9px;height:17px;background:#6d6d6d;"></div>
<svg class="b" style="left:1419px;top:643px" width="9" height="7" viewBox="0 0 9 7"><path d="M0.5 0.5 H8.5 L4.5 6Z" fill="#6d6d6d"/></svg>
<div class="b" style="left:1112px;top:672px;width:325px;height:0;border-top:1px dotted #b5b5b5;"></div>
<div class="t" style="top:679.91px;font-size:11.57px;color:#262626;left:1114.3px;">Drag fields between areas below:</div>
<div class="b" style="left:1113px;top:729px;width:153px;height:133px;background:#fff;"></div>
<div class="b" style="left:1275px;top:729px;width:158px;height:133px;background:#fff;"></div>
<div class="b" style="left:1113px;top:895px;width:153px;height:134px;background:#fff;"></div>
<div class="b" style="left:1275px;top:895px;width:158px;height:134px;background:#fff;"></div>
<div class="b" style="left:1272px;top:709px;width:1px;height:320px;background:#b8b8b8;"></div>
<div class="b" style="left:1113px;top:868px;width:320px;height:1px;background:#b8b8b8;"></div>
<svg class="b" style="left:1117px;top:711px" width="12" height="11" viewBox="0 0 12 11"><path d="M0 0 H11.5 L7 5 V10.5 L4.5 9 V5Z" fill="#777"/></svg>
<div class="t" style="top:711.54px;font-size:12px;color:#262626;left:1136px;">Filters</div>
<svg class="b" style="left:1280px;top:711px" width="10" height="11" viewBox="0 0 10 11"><path d="M1 0 V11 M4 0 V11 M6.5 0 V11 M9 0 V11" stroke="#888" stroke-width="1"/><rect x="0" y="0" width="2" height="11" fill="#888"/></svg>
<div class="t" style="top:711.54px;font-size:12px;color:#262626;left:1298.3px;">Columns</div>
<svg class="b" style="left:1118px;top:877px" width="11" height="10" viewBox="0 0 11 10"><path d="M0 0.5 H11 M0 3.5 H11 M0 6.5 H11 M0 9.5 H11" stroke="#777" stroke-width="1"/></svg>
<div class="t" style="top:878.34px;font-size:12px;color:#262626;left:1136px;">Rows</div>
<div class="t" style="top:878.42px;font-size:12.5px;color:#777;left:1280px;">Σ</div>
<div class="t" style="top:878.34px;font-size:12px;color:#262626;left:1298.3px;">Values</div>
<div class="b" style="left:1114px;top:731px;width:151px;height:20px;border:1px solid #a0a0a0;box-sizing:border-box;background:#fff;"></div>
<div class="t" style="top:734.84px;font-size:12px;color:#262626;left:1121px;">Company Name</div>
<svg class="b" style="left:1252px;top:738px" width="7" height="5" viewBox="0 0 7 5"><path d="M0.5 0.5 L3.5 3.5 L6.5 0.5" fill="none" stroke="#333" stroke-width="1.1"/></svg>
<div class="b" style="left:1276px;top:731px;width:156px;height:20px;border:1px solid #a0a0a0;box-sizing:border-box;background:#fff;"></div>
<svg class="b" style="left:1284px;top:735px" width="11" height="12" viewBox="0 0 11 12"><path d="M10.5 2.2 V0.5 H0.8 L5.6 6 L0.8 11.5 H10.5 V9.8" fill="none" stroke="#333" stroke-width="1"/></svg>
<div class="t" style="top:736.34px;font-size:12px;color:#262626;left:1300.5px;">Values</div>
<svg class="b" style="left:1419px;top:739px" width="7" height="5" viewBox="0 0 7 5"><path d="M0.5 0.5 L3.5 3.5 L6.5 0.5" fill="none" stroke="#333" stroke-width="1.1"/></svg>
<div class="b" style="left:1114px;top:897px;width:151px;height:19px;border:1px solid #a0a0a0;box-sizing:border-box;background:#fff;"></div>
<div class="t" style="top:900.84px;font-size:12px;color:#262626;left:1121px;">TB Sort</div>
<svg class="b" style="left:1252px;top:904px" width="7" height="5" viewBox="0 0 7 5"><path d="M0.5 0.5 L3.5 3.5 L6.5 0.5" fill="none" stroke="#333" stroke-width="1.1"/></svg>
<div class="b" style="left:1114px;top:918px;width:151px;height:19px;border:1px solid #a0a0a0;box-sizing:border-box;background:#fff;"></div>
<div class="t" style="top:921.84px;font-size:12px;color:#262626;left:1121px;">TB Hierarchy: Account...</div>
<svg class="b" style="left:1252px;top:925px" width="7" height="5" viewBox="0 0 7 5"><path d="M0.5 0.5 L3.5 3.5 L6.5 0.5" fill="none" stroke="#333" stroke-width="1.1"/></svg>
<div class="b" style="left:1276px;top:897px;width:156px;height:19px;border:1px solid #a0a0a0;box-sizing:border-box;background:#fff;"></div>
<div class="t" style="top:900.84px;font-size:12px;color:#262626;left:1283px;">.Current Beginning TB ...</div>
<svg class="b" style="left:1419px;top:904px" width="7" height="5" viewBox="0 0 7 5"><path d="M0.5 0.5 L3.5 3.5 L6.5 0.5" fill="none" stroke="#333" stroke-width="1.1"/></svg>
<div class="b" style="left:1276px;top:918px;width:156px;height:19px;border:1px solid #a0a0a0;box-sizing:border-box;background:#fff;"></div>
<div class="t" style="top:922.01px;font-size:11.8px;color:#262626;left:1283px;">.Current Activity Amount</div>
<svg class="b" style="left:1419px;top:925px" width="7" height="5" viewBox="0 0 7 5"><path d="M0.5 0.5 L3.5 3.5 L6.5 0.5" fill="none" stroke="#333" stroke-width="1.1"/></svg>
<div class="b" style="left:1276px;top:939px;width:156px;height:19px;border:1px solid #a0a0a0;box-sizing:border-box;background:#fff;"></div>
<div class="t" style="top:942.84px;font-size:12px;color:#262626;left:1283px;">.Current Activity Budget</div>
<svg class="b" style="left:1419px;top:946px" width="7" height="5" viewBox="0 0 7 5"><path d="M0.5 0.5 L3.5 3.5 L6.5 0.5" fill="none" stroke="#333" stroke-width="1.1"/></svg>
<div class="b" style="left:1276px;top:960px;width:156px;height:19px;border:1px solid #a0a0a0;box-sizing:border-box;background:#fff;"></div>
<div class="t" style="top:963.84px;font-size:12px;color:#262626;left:1283px;">.Current Ending TB Am...</div>
<svg class="b" style="left:1419px;top:967px" width="7" height="5" viewBox="0 0 7 5"><path d="M0.5 0.5 L3.5 3.5 L6.5 0.5" fill="none" stroke="#333" stroke-width="1.1"/></svg>
<div class="b" style="left:1116px;top:1054px;width:13px;height:13px;border:1px solid #6e6e6e;border-radius:2px;box-sizing:border-box;background:#fff;"></div>
<div class="t" style="top:1055.14px;font-size:11.65px;color:#262626;left:1136.4px;">Defer Layout Update</div>
<div class="b" style="left:1383px;top:1048px;width:50px;height:24px;border:1px solid #d6d6d6;box-sizing:border-box;"></div>
<div class="t" style="top:1055.01px;font-size:11.8px;color:#a8a8a8;left:1108px;width:600px;text-align:center;">Update</div>
<div class="b" style="left:1px;top:1px;width:1446px;height:1104px;border:1px solid rgba(255,255,255,0.85);box-sizing:border-box;"></div>
<div class="b" style="left:0;top:0;width:1448px;height:1106px;border:1px solid #107c41;box-sizing:border-box;"></div>
</body></html>
